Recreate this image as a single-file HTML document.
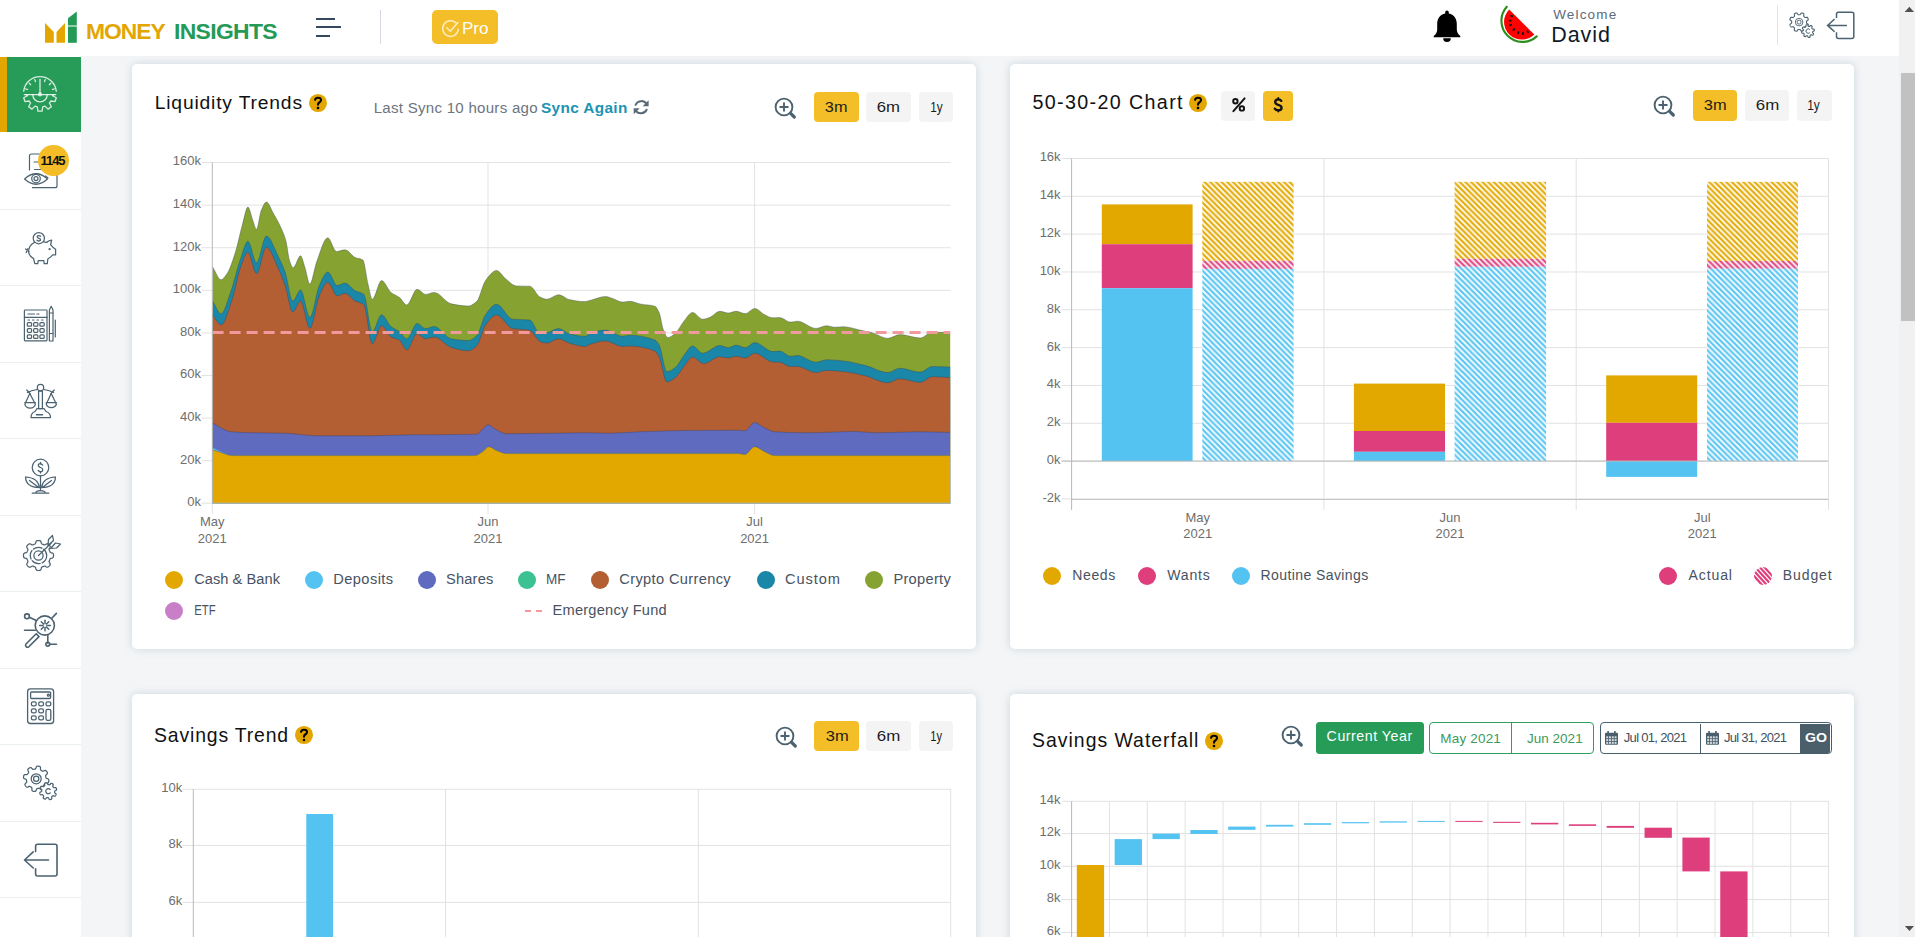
<!DOCTYPE html>
<html><head><meta charset="utf-8"><title>Money Insights</title>
<style>
html,body{margin:0;padding:0;width:1915px;height:937px;overflow:hidden;background:#f4f5f7;font-family:"Liberation Sans",sans-serif}
.abs{position:absolute;display:block;box-sizing:border-box}
.t{position:absolute;white-space:nowrap;display:block}
svg.abs{overflow:visible}
</style></head><body>
<div class="abs" style="left:0;top:0;width:1899px;height:56px;background:#fff"></div>
<svg class="abs" style="left:40px;top:8px" width="40" height="38" viewBox="40 8 40 38">
<polygon points="45,23 53.8,32 53.8,42.8 45,42.8" fill="#e3a600"/>
<polygon points="56.5,32 65,23 65,42.8 56.5,42.8" fill="#e3a600"/>
<polygon points="68,26.5 68,42.8 76.8,42.8 76.8,26.5" fill="#249a56"/>
<polygon points="68,18.3 76.8,11.5 76.8,25.5 68,25.5" fill="#249a56"/>
</svg>
<div class="abs" style="left:316px;top:18px;width:19px;height:2px;background:#34495e"></div>
<div class="abs" style="left:316px;top:26px;width:25px;height:2px;background:#34495e"></div>
<div class="abs" style="left:316px;top:35px;width:14px;height:2px;background:#34495e"></div>
<div class="abs" style="left:380px;top:10px;width:1px;height:34px;background:#d8d8e2"></div>
<div class="abs" style="left:432px;top:10px;width:66px;height:34px;background:#f4be28;border-radius:5px"></div>
<svg class="abs" style="left:438px;top:16px" width="24" height="24" viewBox="438 16 24 24">
<path d="M456 23 A7.8 7.8 0 1 0 458.3 29.2" fill="none" stroke="rgba(255,255,255,0.72)" stroke-width="1.5" stroke-linecap="round"/>
<path d="M446.8 27.8 L450.3 31.2 L457.9 22.4" fill="none" stroke="rgba(255,255,255,0.72)" stroke-width="1.5" stroke-linecap="round" stroke-linejoin="round"/>
</svg>
<svg class="abs" style="left:1430px;top:8px" width="34" height="36" viewBox="0 0 34 36">
<path d="M17 2.5 a1.8 1.8 0 0 1 1.8 1.8 v1.2 c5 1 8 5 8 10.5 v5.5 c0 3 1.5 5 3.5 6.5 v1.3 h-26.6 v-1.3 c2 -1.5 3.5 -3.5 3.5 -6.5 v-5.5 c0 -5.5 3 -9.5 8 -10.5 v-1.2 a1.8 1.8 0 0 1 1.8 -1.8 z" fill="#000"/>
<path d="M13.2 30.2 h7.6 a3.8 3.8 0 0 1 -7.6 0 z" fill="#000"/>
</svg>
<svg class="abs" style="left:1495px;top:2px" width="50" height="46" viewBox="1495 2 50 46">
<path d="M1506.8 6.7 A21.1 21.1 0 0 0 1536.7 36.4" fill="none" stroke="#2b8d1c" stroke-width="2.1" stroke-linecap="round"/>
<path d="M1509.2 9.4 A17.7 17.7 0 0 0 1534.3 34.4 Z" fill="#ff0000"/>
<g fill="#111">
<ellipse cx="1511.7" cy="16" rx="1.5" ry="1" transform="rotate(20 1511.7 16)"/>
<ellipse cx="1510.2" cy="20.7" rx="1.5" ry="1" transform="rotate(-5 1510.2 20.7)"/>
<ellipse cx="1510.6" cy="25.1" rx="1.5" ry="1" transform="rotate(-20 1510.6 25.1)"/>
<ellipse cx="1513.9" cy="29.5" rx="1.6" ry="1" transform="rotate(-45 1513.9 29.5)"/>
<ellipse cx="1518.3" cy="32.7" rx="1.6" ry="1" transform="rotate(-70 1518.3 32.7)"/>
<ellipse cx="1523" cy="33.4" rx="1.6" ry="1" transform="rotate(-90 1523 33.4)"/>
<ellipse cx="1527.7" cy="31.7" rx="1.6" ry="1" transform="rotate(-110 1527.7 31.7)"/>
</g>
</svg>
<div class="abs" style="left:1777px;top:5px;width:1px;height:40px;background:#dfe4e8"></div>
<svg class="abs" style="left:1785px;top:8px" width="34" height="34" viewBox="1785 8 34 34">
<path d="M1806.50 22.10 L1806.50 22.34 L1806.50 22.58 L1806.51 22.83 L1806.58 23.08 L1806.84 23.38 L1807.44 23.76 L1808.01 24.18 L1808.24 24.55 L1808.25 24.87 L1808.18 25.18 L1808.08 25.48 L1807.97 25.77 L1807.84 26.06 L1807.70 26.34 L1807.53 26.61 L1807.29 26.83 L1806.87 26.93 L1806.17 26.82 L1805.48 26.67 L1805.08 26.69 L1804.85 26.82 L1804.67 26.99 L1804.50 27.16 L1804.33 27.33 L1804.16 27.50 L1803.99 27.67 L1803.82 27.85 L1803.69 28.08 L1803.67 28.48 L1803.82 29.17 L1803.93 29.87 L1803.83 30.29 L1803.61 30.53 L1803.34 30.70 L1803.06 30.84 L1802.77 30.97 L1802.48 31.08 L1802.18 31.18 L1801.87 31.25 L1801.55 31.24 L1801.18 31.01 L1800.76 30.44 L1800.38 29.84 L1800.08 29.58 L1799.83 29.51 L1799.58 29.50 L1799.34 29.50 L1799.10 29.50 L1798.86 29.50 L1798.62 29.50 L1798.37 29.51 L1798.12 29.58 L1797.82 29.84 L1797.44 30.44 L1797.02 31.01 L1796.65 31.24 L1796.33 31.25 L1796.02 31.18 L1795.72 31.08 L1795.43 30.97 L1795.14 30.84 L1794.86 30.70 L1794.59 30.53 L1794.37 30.29 L1794.27 29.87 L1794.38 29.17 L1794.53 28.48 L1794.51 28.08 L1794.38 27.85 L1794.21 27.67 L1794.04 27.50 L1793.87 27.33 L1793.70 27.16 L1793.53 26.99 L1793.35 26.82 L1793.12 26.69 L1792.72 26.67 L1792.03 26.82 L1791.33 26.93 L1790.91 26.83 L1790.67 26.61 L1790.50 26.34 L1790.36 26.06 L1790.23 25.77 L1790.12 25.48 L1790.02 25.18 L1789.95 24.87 L1789.96 24.55 L1790.19 24.18 L1790.76 23.76 L1791.36 23.38 L1791.62 23.08 L1791.69 22.83 L1791.70 22.58 L1791.70 22.34 L1791.70 22.10 L1791.70 21.86 L1791.70 21.62 L1791.69 21.37 L1791.62 21.12 L1791.36 20.82 L1790.76 20.44 L1790.19 20.02 L1789.96 19.65 L1789.95 19.33 L1790.02 19.02 L1790.12 18.72 L1790.23 18.43 L1790.36 18.14 L1790.50 17.86 L1790.67 17.59 L1790.91 17.37 L1791.33 17.27 L1792.03 17.38 L1792.72 17.53 L1793.12 17.51 L1793.35 17.38 L1793.53 17.21 L1793.70 17.04 L1793.87 16.87 L1794.04 16.70 L1794.21 16.53 L1794.38 16.35 L1794.51 16.12 L1794.53 15.72 L1794.38 15.03 L1794.27 14.33 L1794.37 13.91 L1794.59 13.67 L1794.86 13.50 L1795.14 13.36 L1795.43 13.23 L1795.72 13.12 L1796.02 13.02 L1796.33 12.95 L1796.65 12.96 L1797.02 13.19 L1797.44 13.76 L1797.82 14.36 L1798.12 14.62 L1798.37 14.69 L1798.62 14.70 L1798.86 14.70 L1799.10 14.70 L1799.34 14.70 L1799.58 14.70 L1799.83 14.69 L1800.08 14.62 L1800.38 14.36 L1800.76 13.76 L1801.18 13.19 L1801.55 12.96 L1801.87 12.95 L1802.18 13.02 L1802.48 13.12 L1802.77 13.23 L1803.06 13.36 L1803.34 13.50 L1803.61 13.67 L1803.83 13.91 L1803.93 14.33 L1803.82 15.03 L1803.67 15.72 L1803.69 16.12 L1803.82 16.35 L1803.99 16.53 L1804.16 16.70 L1804.33 16.87 L1804.50 17.04 L1804.67 17.21 L1804.85 17.38 L1805.08 17.51 L1805.48 17.53 L1806.17 17.38 L1806.87 17.27 L1807.29 17.37 L1807.53 17.59 L1807.70 17.86 L1807.84 18.14 L1807.97 18.43 L1808.08 18.72 L1808.18 19.02 L1808.25 19.33 L1808.24 19.65 L1808.01 20.02 L1807.44 20.44 L1806.84 20.82 L1806.58 21.12 L1806.51 21.37 L1806.50 21.62 L1806.50 21.86Z" fill="none" stroke="#4b6270" stroke-width="1.1" stroke-linejoin="round"/>
<circle cx="1799.1" cy="22.1" r="3.8" fill="none" stroke="#4b6270" stroke-width="0.9"/>
<circle cx="1799.1" cy="22.1" r="2" fill="none" stroke="#4b6270" stroke-width="0.9"/>
<path d="M1812.70 32.05 L1812.67 32.21 L1812.64 32.36 L1812.62 32.52 L1812.64 32.69 L1812.79 32.92 L1813.17 33.26 L1813.52 33.63 L1813.64 33.91 L1813.61 34.12 L1813.52 34.32 L1813.42 34.50 L1813.31 34.68 L1813.19 34.85 L1813.06 35.01 L1812.91 35.16 L1812.72 35.27 L1812.42 35.27 L1811.95 35.07 L1811.49 34.85 L1811.22 34.80 L1811.05 34.85 L1810.91 34.93 L1810.78 35.01 L1810.65 35.10 L1810.52 35.19 L1810.39 35.27 L1810.26 35.37 L1810.15 35.51 L1810.10 35.78 L1810.12 36.28 L1810.12 36.79 L1810.00 37.07 L1809.83 37.20 L1809.63 37.28 L1809.43 37.34 L1809.23 37.38 L1809.02 37.42 L1808.81 37.44 L1808.60 37.44 L1808.39 37.39 L1808.18 37.17 L1807.98 36.70 L1807.81 36.22 L1807.66 35.99 L1807.51 35.91 L1807.35 35.87 L1807.20 35.83 L1807.05 35.80 L1806.89 35.77 L1806.74 35.74 L1806.58 35.72 L1806.41 35.74 L1806.18 35.89 L1805.84 36.27 L1805.47 36.62 L1805.19 36.74 L1804.98 36.71 L1804.78 36.62 L1804.60 36.52 L1804.42 36.41 L1804.25 36.29 L1804.09 36.16 L1803.94 36.01 L1803.83 35.82 L1803.83 35.52 L1804.03 35.05 L1804.25 34.59 L1804.30 34.32 L1804.25 34.15 L1804.17 34.01 L1804.09 33.88 L1804.00 33.75 L1803.91 33.62 L1803.83 33.49 L1803.73 33.36 L1803.59 33.25 L1803.32 33.20 L1802.82 33.22 L1802.31 33.22 L1802.03 33.10 L1801.90 32.93 L1801.82 32.73 L1801.76 32.53 L1801.72 32.33 L1801.68 32.12 L1801.66 31.91 L1801.66 31.70 L1801.71 31.49 L1801.93 31.28 L1802.40 31.08 L1802.88 30.91 L1803.11 30.76 L1803.19 30.61 L1803.23 30.45 L1803.27 30.30 L1803.30 30.15 L1803.33 29.99 L1803.36 29.84 L1803.38 29.68 L1803.36 29.51 L1803.21 29.28 L1802.83 28.94 L1802.48 28.57 L1802.36 28.29 L1802.39 28.08 L1802.48 27.88 L1802.58 27.70 L1802.69 27.52 L1802.81 27.35 L1802.94 27.19 L1803.09 27.04 L1803.28 26.93 L1803.58 26.93 L1804.05 27.13 L1804.51 27.35 L1804.78 27.40 L1804.95 27.35 L1805.09 27.27 L1805.22 27.19 L1805.35 27.10 L1805.48 27.01 L1805.61 26.93 L1805.74 26.83 L1805.85 26.69 L1805.90 26.42 L1805.88 25.92 L1805.88 25.41 L1806.00 25.13 L1806.17 25.00 L1806.37 24.92 L1806.57 24.86 L1806.77 24.82 L1806.98 24.78 L1807.19 24.76 L1807.40 24.76 L1807.61 24.81 L1807.82 25.03 L1808.02 25.50 L1808.19 25.98 L1808.34 26.21 L1808.49 26.29 L1808.65 26.33 L1808.80 26.37 L1808.95 26.40 L1809.11 26.43 L1809.26 26.46 L1809.42 26.48 L1809.59 26.46 L1809.82 26.31 L1810.16 25.93 L1810.53 25.58 L1810.81 25.46 L1811.02 25.49 L1811.22 25.58 L1811.40 25.68 L1811.58 25.79 L1811.75 25.91 L1811.91 26.04 L1812.06 26.19 L1812.17 26.38 L1812.17 26.68 L1811.97 27.15 L1811.75 27.61 L1811.70 27.88 L1811.75 28.05 L1811.83 28.19 L1811.91 28.32 L1812.00 28.45 L1812.09 28.58 L1812.17 28.71 L1812.27 28.84 L1812.41 28.95 L1812.68 29.00 L1813.18 28.98 L1813.69 28.98 L1813.97 29.10 L1814.10 29.27 L1814.18 29.47 L1814.24 29.67 L1814.28 29.87 L1814.32 30.08 L1814.34 30.29 L1814.34 30.50 L1814.29 30.71 L1814.07 30.92 L1813.60 31.12 L1813.12 31.29 L1812.89 31.44 L1812.81 31.59 L1812.77 31.75 L1812.73 31.90Z" fill="#fff" stroke="#4b6270" stroke-width="1.1" stroke-linejoin="round"/>
<path d="M1809.8 29.6 A2.2 2.2 0 1 0 1809.8 32.6" fill="none" stroke="#4b6270" stroke-width="1"/>
</svg>
<svg class="abs" style="left:1824px;top:9px" width="34" height="34" viewBox="1824 9 34 34">
<path d="M1836.5 17.9 V14.2 a2 2 0 0 1 2 -2 H1851.8 a2 2 0 0 1 2 2 V36.4 a2 2 0 0 1 -2 2 H1838.5 a2 2 0 0 1 -2 -2 V32.3" fill="none" stroke="#4b6270" stroke-width="1.5"/>
<path d="M1834.6 19 L1827.6 25.4 L1834.6 31.7 M1827.6 25.4 H1846.9" fill="none" stroke="#4b6270" stroke-width="1.5"/>
</svg>
<div class="abs" style="left:0;top:56px;width:81px;height:881px;background:#fff"></div>
<div class="abs" style="left:0;top:57px;width:81px;height:74.5px;background:#279c59"></div>
<div class="abs" style="left:0;top:57px;width:6.5px;height:74.5px;background:#e3a600"></div>
<div class="abs" style="left:0;top:208.5px;width:81px;height:1px;background:#eaf0f0"></div>
<div class="abs" style="left:0;top:285.0px;width:81px;height:1px;background:#eaf0f0"></div>
<div class="abs" style="left:0;top:361.5px;width:81px;height:1px;background:#eaf0f0"></div>
<div class="abs" style="left:0;top:438.0px;width:81px;height:1px;background:#eaf0f0"></div>
<div class="abs" style="left:0;top:514.5px;width:81px;height:1px;background:#eaf0f0"></div>
<div class="abs" style="left:0;top:591.0px;width:81px;height:1px;background:#eaf0f0"></div>
<div class="abs" style="left:0;top:667.5px;width:81px;height:1px;background:#eaf0f0"></div>
<div class="abs" style="left:0;top:744.0px;width:81px;height:1px;background:#eaf0f0"></div>
<div class="abs" style="left:0;top:820.5px;width:81px;height:1px;background:#eaf0f0"></div>
<div class="abs" style="left:0;top:897.0px;width:81px;height:1px;background:#eaf0f0"></div>
<svg class="abs" style="left:20px;top:74px" width="40" height="40" viewBox="20 74 40 40">
<g fill="none" stroke="rgba(255,255,255,0.82)" stroke-width="1.3" stroke-linecap="round" stroke-linejoin="round">
<path d="M23.7 91.2 A16.4 16.4 0 0 1 56.3 91.2"/>
<line x1="27.60" y1="89.49" x2="25.72" y2="88.80"/><line x1="30.67" y1="84.67" x2="29.25" y2="83.25"/><line x1="35.49" y1="81.60" x2="34.80" y2="79.72"/><line x1="44.51" y1="81.60" x2="45.20" y2="79.72"/><line x1="49.33" y1="84.67" x2="50.75" y2="83.25"/><line x1="52.40" y1="89.49" x2="54.28" y2="88.80"/>
<line x1="40" y1="79.5" x2="40" y2="93"/>
<circle cx="40" cy="94.4" r="1.4"/>
<path d="M24.3 94.6 H55.7"/>
<path d="M32.7 94.6 A7.3 7.3 0 0 0 47.3 94.6"/>
<path d="M54.10 94.60 L52.54 95.79 L56.31 97.71 L55.02 101.67 L50.85 101.01 L49.45 102.93 L51.36 106.70 L48.00 109.15 L45.00 106.16 L42.75 106.90 L42.08 111.07 L37.92 111.07 L37.25 106.90 L35.00 106.16 L32.00 109.15 L28.64 106.70 L30.55 102.93 L29.15 101.01 L24.98 101.67 L23.69 97.71 L27.46 95.79 L25.90 94.60"/>
</g></svg>
<svg class="abs" style="left:20px;top:148px" width="42" height="44" viewBox="20 148 42 44">
<g fill="none" stroke="#4b6270" stroke-width="1.2" stroke-linecap="round" stroke-linejoin="round">
<path d="M29.5 170 V156 a2 2 0 0 1 2 -2 H55 a2 2 0 0 1 2 2 V185.7 a2 2 0 0 1 -2 2 H32.5"/>
<line x1="34" y1="162" x2="38" y2="162"/><line x1="34.5" y1="169.5" x2="41" y2="169.5"/>
<path d="M24.6 179 Q36 168.5 47.5 179 Q36 189.5 24.6 179 Z" fill="#fff"/>
<circle cx="36" cy="178.6" r="4.3"/><circle cx="36" cy="178.6" r="2"/>
<line x1="45.5" y1="176" x2="48" y2="178"/>
</g></svg>
<div class="abs" style="left:38px;top:145px;width:30.6px;height:30.6px;border-radius:50%;background:#f4bd28"></div>
<svg class="abs" style="left:20px;top:226px" width="42" height="42" viewBox="20 226 42 42">
<g fill="none" stroke="#4b6270" stroke-width="1.25" stroke-linecap="round" stroke-linejoin="round">
<circle cx="38.8" cy="238.2" r="5.6"/>
<path d="M40.6 236.3 Q38.8 234.8 37.2 236.3 Q37 238 38.8 238.3 Q40.7 238.6 40.4 240.3 Q38.8 241.8 37 240.2"/>
<path d="M34.4 242.5 Q29 245 28.6 251.5 Q28.8 256 33.6 258.6 L34.8 263.6 H37.8 L38.2 260.5 H43.8 L44.2 263.6 H47.3 L47.8 259 Q51.5 257 52.6 254.8 H55.6 V249.2 L53.4 247.8 Q52 246 50.6 244.8 L51.6 240.2 Q48 240.8 46.6 242.5 Q45 241.8 43.8 241.8"/>
<path d="M25.6 249 L28.8 251.5 M26.2 252.6 L28 248.6"/>
<circle cx="49.6" cy="249.2" r="0.5"/>
</g></svg>
<svg class="abs" style="left:20px;top:302px" width="42" height="44" viewBox="20 302 42 44">
<g fill="none" stroke="#4b6270" stroke-width="1.2" stroke-linecap="round" stroke-linejoin="round">
<rect x="24.4" y="310" width="22.6" height="30.8" rx="0.8"/>
<line x1="24.4" y1="317.4" x2="47" y2="317.4"/>
<line x1="28" y1="314" x2="34.5" y2="314"/><line x1="36.8" y1="314" x2="39" y2="314"/>
<line x1="28" y1="320" x2="43.8" y2="320" stroke-dasharray="1.5 3"/>
<rect x="27.3" y="322.6" width="4.3" height="3.6" rx="1"/><rect x="33.6" y="322.6" width="4.3" height="3.6" rx="1"/><rect x="39.9" y="322.6" width="4.3" height="3.6" rx="1"/><rect x="27.3" y="328.7" width="4.3" height="3.6" rx="1"/><rect x="33.6" y="328.7" width="4.3" height="3.6" rx="1"/><rect x="39.9" y="328.7" width="4.3" height="3.6" rx="1"/><rect x="27.3" y="334.8" width="4.3" height="3.6" rx="1"/><rect x="33.6" y="334.8" width="4.3" height="3.6" rx="1"/><rect x="39.9" y="334.8" width="4.3" height="3.6" rx="1"/>
<path d="M49.4 341 V310 L51.2 306.3 L53 310 V341 Z"/>
<line x1="49.4" y1="313" x2="53" y2="313"/><line x1="49.4" y1="333.5" x2="53" y2="333.5"/>
<line x1="55.3" y1="320" x2="55.3" y2="337"/>
</g></svg>
<svg class="abs" style="left:20px;top:378px" width="42" height="44" viewBox="20 378 42 44">
<g fill="none" stroke="#4b6270" stroke-width="1.25" stroke-linecap="round" stroke-linejoin="round">
<circle cx="40.5" cy="387.6" r="3.2"/>
<path d="M37.2 389.5 Q31 390.5 27.5 392.5 M43.8 389.5 Q50 390.5 53.5 392.5"/>
<path d="M26.8 390 L30 393.5 M54.2 390 L51 393.5"/>
<rect x="38.6" y="391" width="3.8" height="17.5"/>
<path d="M29.8 393.5 L24.8 404.2 A5.5 5.5 0 0 0 35.4 404.2 Z M24.8 402.6 H35.4"/>
<path d="M51.2 393.5 L46.2 404.2 A5.5 5.5 0 0 0 56.4 404.2 Z M46.2 402.6 H56.4"/>
<path d="M37 408.5 H44 L46 411.5 Q50.5 413 50.5 417.5 H31 Q31 413 35 411.5 Z"/>
<line x1="36.5" y1="414.8" x2="42.5" y2="414.8" stroke-width="1.6"/>
</g></svg>
<svg class="abs" style="left:20px;top:454px" width="42" height="44" viewBox="20 454 42 44">
<g fill="none" stroke="#4b6270" stroke-width="1.25" stroke-linecap="round" stroke-linejoin="round">
<circle cx="40.5" cy="467.5" r="8.3"/>
<path d="M42.6 465 Q40.5 462.5 38.5 464.2 Q37.6 466.5 40.5 467.5 Q43.5 468.5 42.5 471 Q40.5 472.8 38.2 470.5 M40.5 462.3 V464 M40.5 471.5 V473"/>
<line x1="40.5" y1="475.8" x2="40.5" y2="490.5"/>
<path d="M39.5 487.5 Q38 477.5 25.5 477 Q26 487.5 39.5 487.5 Z M29.5 480.5 L38 487"/>
<path d="M41.5 487.5 Q43 477.5 55.5 477 Q55 487.5 41.5 487.5 Z M51.5 480.5 L43 487"/>
<path d="M35.6 493 Q36 490.5 40.5 490.5 Q45 490.5 45.4 493 M32.2 493.2 H48.8"/>
</g></svg>
<svg class="abs" style="left:20px;top:530px" width="42" height="46" viewBox="20 530 42 46">
<g fill="none" stroke="#4b6270" stroke-width="1.25" stroke-linecap="round" stroke-linejoin="round">
<path d="M49.60 560.06 L49.45 560.42 L49.29 560.79 L49.15 561.16 L49.08 561.57 L49.23 562.13 L49.75 562.97 L50.22 563.85 L50.27 564.48 L50.08 564.95 L49.79 565.35 L49.47 565.72 L49.14 566.08 L48.78 566.42 L48.41 566.74 L48.01 567.02 L47.55 567.22 L46.91 567.17 L46.03 566.70 L45.19 566.19 L44.63 566.04 L44.21 566.12 L43.84 566.26 L43.48 566.42 L43.12 566.57 L42.76 566.72 L42.39 566.87 L42.03 567.03 L41.69 567.27 L41.40 567.77 L41.17 568.73 L40.88 569.69 L40.47 570.17 L40.00 570.37 L39.52 570.45 L39.03 570.49 L38.54 570.50 L38.05 570.49 L37.56 570.45 L37.08 570.37 L36.61 570.19 L36.19 569.70 L35.90 568.75 L35.67 567.79 L35.38 567.29 L35.03 567.05 L34.67 566.89 L34.30 566.75 L33.94 566.60 L33.58 566.45 L33.21 566.29 L32.84 566.15 L32.43 566.08 L31.87 566.23 L31.03 566.75 L30.15 567.22 L29.52 567.27 L29.05 567.08 L28.65 566.79 L28.28 566.47 L27.92 566.14 L27.58 565.78 L27.26 565.41 L26.98 565.01 L26.78 564.55 L26.83 563.91 L27.30 563.03 L27.81 562.19 L27.96 561.63 L27.88 561.21 L27.74 560.84 L27.58 560.48 L27.43 560.12 L27.28 559.76 L27.13 559.39 L26.97 559.03 L26.73 558.69 L26.23 558.40 L25.27 558.17 L24.31 557.88 L23.83 557.47 L23.63 557.00 L23.55 556.52 L23.51 556.03 L23.50 555.54 L23.51 555.05 L23.55 554.56 L23.63 554.08 L23.81 553.61 L24.30 553.19 L25.25 552.90 L26.21 552.67 L26.71 552.38 L26.95 552.03 L27.11 551.67 L27.25 551.30 L27.40 550.94 L27.55 550.58 L27.71 550.21 L27.85 549.84 L27.92 549.43 L27.77 548.87 L27.25 548.03 L26.78 547.15 L26.73 546.52 L26.92 546.05 L27.21 545.65 L27.53 545.28 L27.86 544.92 L28.22 544.58 L28.59 544.26 L28.99 543.98 L29.45 543.78 L30.09 543.83 L30.97 544.30 L31.81 544.81 L32.37 544.96 L32.79 544.88 L33.16 544.74 L33.52 544.58 L33.88 544.43 L34.24 544.28 L34.61 544.13 L34.97 543.97 L35.31 543.73 L35.60 543.23 L35.83 542.27 L36.12 541.31 L36.53 540.83 L37.00 540.63 L37.48 540.55 L37.97 540.51 L38.46 540.50 L38.95 540.51 L39.44 540.55 L39.92 540.63 L40.39 540.81 L40.81 541.30 L41.10 542.25 L41.33 543.21 L41.62 543.71 L41.97 543.95 L42.33 544.11 L42.70 544.25 L43.06 544.40 L43.42 544.55 L43.79 544.71 L44.16 544.85 L44.57 544.92 L45.13 544.77 L45.97 544.25 L46.85 543.78 L47.48 543.73 L47.95 543.92 L48.35 544.21 L48.72 544.53 L49.08 544.86 L49.42 545.22 L49.74 545.59 L50.02 545.99 L50.22 546.45 L50.17 547.09 L49.70 547.97 L49.19 548.81 L49.04 549.37 L49.12 549.79 L49.26 550.16 L49.42 550.52 L49.57 550.88 L49.72 551.24 L49.87 551.61 L50.03 551.97 L50.27 552.31 L50.77 552.60 L51.73 552.83 L52.69 553.12 L53.17 553.53 L53.37 554.00 L53.45 554.48 L53.49 554.97 L53.50 555.46 L53.49 555.95 L53.45 556.44 L53.37 556.92 L53.19 557.39 L52.70 557.81 L51.75 558.10 L50.79 558.33 L50.29 558.62 L50.05 558.97 L49.89 559.33 L49.75 559.70Z"/>
<circle cx="38.5" cy="555.5" r="8.2" stroke-dasharray="9 2"/>
<circle cx="38.5" cy="555.5" r="4.6"/>
<line x1="38.5" y1="555.5" x2="51" y2="543.2"/>
<path d="M48 545.5 L48.5 539.5 L52.5 535.5 L53.5 540.5 Z M50.5 548.5 L56.5 548 L60.5 544 L55.5 543 Z"/>
</g></svg>
<svg class="abs" style="left:20px;top:606px" width="42" height="46" viewBox="20 606 42 46">
<g fill="none" stroke="#4b6270" stroke-width="1.6" stroke-linecap="round" stroke-linejoin="round">
<circle cx="44.8" cy="625.5" r="9.6"/>
<circle cx="27" cy="616.3" r="2.4"/>
<line x1="29.3" y1="617.3" x2="35.8" y2="620.3"/>
<line x1="24.5" y1="630.3" x2="35.4" y2="630.3"/>
<line x1="51.5" y1="618.5" x2="56.4" y2="613.4"/>
<path d="M47.8 635 V643.2 M49.6 644.2 H56.5"/><circle cx="47.8" cy="644.2" r="1.9"/>
<path d="M36.2 633.8 L26 644 A2 2 0 0 0 28.8 646.8 L39 636.6 Z"/>
</g>
<g stroke="#4b6270" stroke-width="1.5" stroke-linecap="round">
<line x1="47.00" y1="625.50" x2="50.30" y2="625.50"/><line x1="46.41" y1="626.91" x2="48.75" y2="629.25"/><line x1="45.00" y1="627.50" x2="45.00" y2="630.80"/><line x1="43.59" y1="626.91" x2="41.25" y2="629.25"/><line x1="43.00" y1="625.50" x2="39.70" y2="625.50"/><line x1="43.59" y1="624.09" x2="41.25" y2="621.75"/><line x1="45.00" y1="623.50" x2="45.00" y2="620.20"/><line x1="46.41" y1="624.09" x2="48.75" y2="621.75"/>
</g></svg>
<svg class="abs" style="left:20px;top:684px" width="42" height="44" viewBox="20 684 42 44">
<g fill="none" stroke="#4b6270" stroke-width="1.3" stroke-linecap="round" stroke-linejoin="round">
<rect x="27.6" y="688.9" width="26" height="34.6" rx="2.8"/>
<rect x="30.6" y="692" width="20" height="6.5" rx="1"/>
<rect x="31.4" y="701.8" width="4.8" height="4" rx="1.6"/><rect x="38.7" y="701.8" width="4.8" height="4" rx="1.6"/><rect x="46.0" y="701.8" width="4.8" height="4" rx="1.6"/><rect x="31.4" y="708.8" width="4.8" height="4" rx="1.6"/><rect x="38.7" y="708.8" width="4.8" height="4" rx="1.6"/><rect x="31.4" y="715.8" width="4.8" height="4" rx="1.6"/><rect x="38.7" y="715.8" width="4.8" height="4" rx="1.6"/>
<rect x="46" y="709.3" width="4.8" height="11" rx="1.6"/>
<circle cx="48.4" cy="695.2" r="1"/>
</g></svg>
<svg class="abs" style="left:20px;top:760px" width="42" height="44" viewBox="20 760 42 44">
<g fill="none" stroke="#4b6270" stroke-width="1.25" stroke-linecap="round" stroke-linejoin="round">
<path d="M45.80 776.85 L45.87 777.17 L45.93 777.48 L46.01 777.80 L46.17 778.11 L46.60 778.42 L47.50 778.76 L48.38 779.15 L48.78 779.58 L48.88 780.00 L48.88 780.42 L48.83 780.84 L48.76 781.25 L48.67 781.66 L48.56 782.06 L48.41 782.45 L48.15 782.81 L47.62 783.05 L46.66 783.09 L45.70 783.06 L45.18 783.19 L44.91 783.42 L44.72 783.68 L44.54 783.95 L44.37 784.21 L44.19 784.48 L44.01 784.75 L43.84 785.03 L43.74 785.36 L43.82 785.89 L44.22 786.76 L44.57 787.67 L44.55 788.25 L44.32 788.62 L44.02 788.91 L43.69 789.17 L43.35 789.42 L43.00 789.64 L42.63 789.85 L42.25 790.02 L41.82 790.09 L41.27 789.89 L40.56 789.22 L39.90 788.53 L39.45 788.25 L39.10 788.22 L38.78 788.27 L38.46 788.34 L38.15 788.40 L37.83 788.47 L37.52 788.53 L37.20 788.61 L36.89 788.77 L36.58 789.20 L36.24 790.10 L35.85 790.98 L35.42 791.38 L35.00 791.48 L34.58 791.48 L34.16 791.43 L33.75 791.36 L33.34 791.27 L32.94 791.16 L32.55 791.01 L32.19 790.75 L31.95 790.22 L31.91 789.26 L31.94 788.30 L31.81 787.78 L31.58 787.51 L31.32 787.32 L31.05 787.14 L30.79 786.97 L30.52 786.79 L30.25 786.61 L29.97 786.44 L29.64 786.34 L29.11 786.42 L28.24 786.82 L27.33 787.17 L26.75 787.15 L26.38 786.92 L26.09 786.62 L25.83 786.29 L25.58 785.95 L25.36 785.60 L25.15 785.23 L24.98 784.85 L24.91 784.42 L25.11 783.87 L25.78 783.16 L26.47 782.50 L26.75 782.05 L26.78 781.70 L26.73 781.38 L26.66 781.06 L26.60 780.75 L26.53 780.43 L26.47 780.12 L26.39 779.80 L26.23 779.49 L25.80 779.18 L24.90 778.84 L24.02 778.45 L23.62 778.02 L23.52 777.60 L23.52 777.18 L23.57 776.76 L23.64 776.35 L23.73 775.94 L23.84 775.54 L23.99 775.15 L24.25 774.79 L24.78 774.55 L25.74 774.51 L26.70 774.54 L27.22 774.41 L27.49 774.18 L27.68 773.92 L27.86 773.65 L28.03 773.39 L28.21 773.12 L28.39 772.85 L28.56 772.57 L28.66 772.24 L28.58 771.71 L28.18 770.84 L27.83 769.93 L27.85 769.35 L28.08 768.98 L28.38 768.69 L28.71 768.43 L29.05 768.18 L29.40 767.96 L29.77 767.75 L30.15 767.58 L30.58 767.51 L31.13 767.71 L31.84 768.38 L32.50 769.07 L32.95 769.35 L33.30 769.38 L33.62 769.33 L33.94 769.26 L34.25 769.20 L34.57 769.13 L34.88 769.07 L35.20 768.99 L35.51 768.83 L35.82 768.40 L36.16 767.50 L36.55 766.62 L36.98 766.22 L37.40 766.12 L37.82 766.12 L38.24 766.17 L38.65 766.24 L39.06 766.33 L39.46 766.44 L39.85 766.59 L40.21 766.85 L40.45 767.38 L40.49 768.34 L40.46 769.30 L40.59 769.82 L40.82 770.09 L41.08 770.28 L41.35 770.46 L41.61 770.63 L41.88 770.81 L42.15 770.99 L42.43 771.16 L42.76 771.26 L43.29 771.18 L44.16 770.78 L45.07 770.43 L45.65 770.45 L46.02 770.68 L46.31 770.98 L46.57 771.31 L46.82 771.65 L47.04 772.00 L47.25 772.37 L47.42 772.75 L47.49 773.18 L47.29 773.73 L46.62 774.44 L45.93 775.10 L45.65 775.55 L45.62 775.90 L45.67 776.22 L45.74 776.54Z"/>
<circle cx="36.2" cy="778.8" r="5"/><circle cx="36.2" cy="778.8" r="2.6"/>
<path d="M54.67 791.85 L54.65 792.06 L54.62 792.27 L54.61 792.49 L54.66 792.72 L54.89 793.01 L55.42 793.40 L55.93 793.84 L56.12 794.20 L56.10 794.49 L56.02 794.76 L55.90 795.02 L55.78 795.27 L55.64 795.51 L55.48 795.75 L55.31 795.97 L55.07 796.14 L54.68 796.19 L54.03 796.00 L53.40 795.78 L53.03 795.74 L52.82 795.83 L52.64 795.96 L52.48 796.10 L52.31 796.23 L52.15 796.37 L51.98 796.50 L51.82 796.65 L51.69 796.84 L51.65 797.21 L51.75 797.86 L51.80 798.54 L51.68 798.92 L51.46 799.11 L51.21 799.24 L50.95 799.35 L50.68 799.43 L50.41 799.51 L50.13 799.57 L49.85 799.60 L49.56 799.55 L49.25 799.31 L48.93 798.71 L48.64 798.11 L48.40 797.83 L48.19 797.74 L47.98 797.71 L47.76 797.69 L47.55 797.67 L47.34 797.65 L47.13 797.62 L46.91 797.61 L46.68 797.66 L46.39 797.89 L46.00 798.42 L45.56 798.93 L45.20 799.12 L44.91 799.10 L44.64 799.02 L44.38 798.90 L44.13 798.78 L43.89 798.64 L43.65 798.48 L43.43 798.31 L43.26 798.07 L43.21 797.68 L43.40 797.03 L43.62 796.40 L43.66 796.03 L43.57 795.82 L43.44 795.64 L43.30 795.48 L43.17 795.31 L43.03 795.15 L42.90 794.98 L42.75 794.82 L42.56 794.69 L42.19 794.65 L41.54 794.75 L40.86 794.80 L40.48 794.68 L40.29 794.46 L40.16 794.21 L40.05 793.95 L39.97 793.68 L39.89 793.41 L39.83 793.13 L39.80 792.85 L39.85 792.56 L40.09 792.25 L40.69 791.93 L41.29 791.64 L41.57 791.40 L41.66 791.19 L41.69 790.98 L41.71 790.76 L41.73 790.55 L41.75 790.34 L41.78 790.13 L41.79 789.91 L41.74 789.68 L41.51 789.39 L40.98 789.00 L40.47 788.56 L40.28 788.20 L40.30 787.91 L40.38 787.64 L40.50 787.38 L40.62 787.13 L40.76 786.89 L40.92 786.65 L41.09 786.43 L41.33 786.26 L41.72 786.21 L42.37 786.40 L43.00 786.62 L43.37 786.66 L43.58 786.57 L43.76 786.44 L43.92 786.30 L44.09 786.17 L44.25 786.03 L44.42 785.90 L44.58 785.75 L44.71 785.56 L44.75 785.19 L44.65 784.54 L44.60 783.86 L44.72 783.48 L44.94 783.29 L45.19 783.16 L45.45 783.05 L45.72 782.97 L45.99 782.89 L46.27 782.83 L46.55 782.80 L46.84 782.85 L47.15 783.09 L47.47 783.69 L47.76 784.29 L48.00 784.57 L48.21 784.66 L48.42 784.69 L48.64 784.71 L48.85 784.73 L49.06 784.75 L49.27 784.78 L49.49 784.79 L49.72 784.74 L50.01 784.51 L50.40 783.98 L50.84 783.47 L51.20 783.28 L51.49 783.30 L51.76 783.38 L52.02 783.50 L52.27 783.62 L52.51 783.76 L52.75 783.92 L52.97 784.09 L53.14 784.33 L53.19 784.72 L53.00 785.37 L52.78 786.00 L52.74 786.37 L52.83 786.58 L52.96 786.76 L53.10 786.92 L53.23 787.09 L53.37 787.25 L53.50 787.42 L53.65 787.58 L53.84 787.71 L54.21 787.75 L54.86 787.65 L55.54 787.60 L55.92 787.72 L56.11 787.94 L56.24 788.19 L56.35 788.45 L56.43 788.72 L56.51 788.99 L56.57 789.27 L56.60 789.55 L56.55 789.84 L56.31 790.15 L55.71 790.47 L55.11 790.76 L54.83 791.00 L54.74 791.21 L54.71 791.42 L54.69 791.64Z" fill="#fff"/>
<path d="M50.2 789.6 A2.5 2.5 0 1 0 50.2 792.8"/>
</g></svg>
<svg class="abs" style="left:20px;top:836px" width="42" height="46" viewBox="20 836 42 46">
<g fill="none" stroke="#4b6270" stroke-width="1.6" stroke-linecap="round" stroke-linejoin="round">
<path d="M35.6 851.5 V846.2 a2 2 0 0 1 2 -2 H55 a2 2 0 0 1 2 2 V874 a2 2 0 0 1 -2 2 H37.6 a2 2 0 0 1 -2 -2 V868.7"/>
<path d="M33 857 L24.2 860 L33 863 " stroke="none"/>
<path d="M33.2 851.8 L24.5 860 L33.2 868 M24.5 860 H48.5"/>
</g></svg>
<div class="abs" style="left:1899px;top:0;width:16px;height:937px;background:#f1f1f1"></div>
<div class="abs" style="left:1901px;top:73px;width:14px;height:248px;background:#c1c1c1"></div>
<svg class="abs" style="left:1899px;top:0" width="16" height="937" viewBox="0 0 16 937">
<polygon points="5.7,12 15,12 10.35,6.7" fill="#505050"/>
<polygon points="5.9,926 15,926 10.45,931" fill="#505050"/>
</svg>
<div class="abs" style="left:131.7px;top:64px;width:844.4px;height:585px;background:#fff;border-radius:5px;box-shadow:0 0 9px rgba(105,150,165,0.30)"></div>
<div class="abs" style="left:1009.9px;top:64px;width:844.3px;height:585px;background:#fff;border-radius:5px;box-shadow:0 0 9px rgba(105,150,165,0.30)"></div>
<div class="abs" style="left:131.7px;top:693.6px;width:844.4px;height:400px;background:#fff;border-radius:5px;box-shadow:0 0 9px rgba(105,150,165,0.30)"></div>
<div class="abs" style="left:1009.9px;top:693.6px;width:844.3px;height:400px;background:#fff;border-radius:5px;box-shadow:0 0 9px rgba(105,150,165,0.30)"></div>
<svg class="abs" style="left:0;top:0" width="1000" height="600" viewBox="0 0 1000 600"><line x1="201.5" y1="503.20" x2="950.6" y2="503.20" stroke="#e3e3e3" stroke-width="1"/><line x1="201.5" y1="460.62" x2="950.6" y2="460.62" stroke="#e3e3e3" stroke-width="1"/><line x1="201.5" y1="418.04" x2="950.6" y2="418.04" stroke="#e3e3e3" stroke-width="1"/><line x1="201.5" y1="375.46" x2="950.6" y2="375.46" stroke="#e3e3e3" stroke-width="1"/><line x1="201.5" y1="332.88" x2="950.6" y2="332.88" stroke="#e3e3e3" stroke-width="1"/><line x1="201.5" y1="290.30" x2="950.6" y2="290.30" stroke="#e3e3e3" stroke-width="1"/><line x1="201.5" y1="247.72" x2="950.6" y2="247.72" stroke="#e3e3e3" stroke-width="1"/><line x1="201.5" y1="205.14" x2="950.6" y2="205.14" stroke="#e3e3e3" stroke-width="1"/><line x1="201.5" y1="162.56" x2="950.6" y2="162.56" stroke="#e3e3e3" stroke-width="1"/><line x1="488" y1="162.5" x2="488" y2="514" stroke="#e3e3e3" stroke-width="1"/><line x1="754.6" y1="162.5" x2="754.6" y2="514" stroke="#e3e3e3" stroke-width="1"/><line x1="212.3" y1="503" x2="212.3" y2="514" stroke="#e3e3e3" stroke-width="1"/><path d="M212.60 266.90 C215.43 271.17 218.27 279.70 221.10 279.70 C223.07 279.70 225.03 276.49 227.00 273.70 C229.87 269.63 232.73 260.53 235.60 251.50 C237.90 244.26 240.20 232.25 242.50 224.20 C244.30 217.90 246.10 207.10 247.90 207.10 C249.50 207.10 251.10 215.80 252.70 219.90 C253.97 223.15 255.23 229.30 256.50 229.30 C258.07 229.30 259.63 214.16 261.20 210.50 C262.93 206.45 264.67 202.00 266.40 202.00 C268.67 202.00 270.93 209.03 273.20 213.00 C276.03 217.96 278.87 222.75 281.70 229.30 C283.13 232.61 284.57 235.84 286.00 241.20 C287.13 245.44 288.27 256.61 289.40 260.00 C290.67 263.79 291.93 267.70 293.20 267.70 C295.63 267.70 298.07 255.80 300.50 255.80 C301.93 255.80 303.37 262.74 304.80 266.90 C306.50 271.83 308.20 283.90 309.90 283.90 C312.17 283.90 314.43 267.68 316.70 261.70 C320.40 251.94 324.10 237.80 327.80 237.80 C330.67 237.80 333.53 251.50 336.40 251.50 C339.27 251.50 342.13 249.80 345.00 249.80 C348.40 249.80 351.80 255.98 355.20 257.50 C357.77 258.64 360.33 258.34 362.90 260.00 C364.60 261.10 366.30 277.02 368.00 283.90 C369.43 289.70 370.87 299.30 372.30 299.30 C375.40 299.30 378.50 280.50 381.60 280.50 C384.73 280.50 387.87 289.98 391.00 292.50 C393.87 294.81 396.73 295.43 399.60 297.60 C402.00 299.42 404.40 305.00 406.80 305.00 C410.23 305.00 413.67 289.30 417.10 289.30 C419.93 289.30 422.77 294.40 425.60 294.40 C428.47 294.40 431.33 292.40 434.20 292.40 C439.87 292.40 445.53 302.58 451.20 303.80 C456.90 305.03 462.60 306.00 468.30 306.00 C471.17 306.00 474.03 303.80 476.90 301.20 C479.73 298.63 482.57 284.55 485.40 280.70 C489.10 275.68 492.80 270.50 496.50 270.50 C499.63 270.50 502.77 276.57 505.90 279.00 C509.30 281.64 512.70 285.75 516.10 285.90 C520.67 286.10 525.23 285.99 529.80 286.20 C533.20 286.35 536.60 295.39 540.00 297.00 C542.30 298.09 544.60 299.20 546.90 299.20 C550.87 299.20 554.83 294.70 558.80 294.70 C562.23 294.70 565.67 298.75 569.10 299.50 C574.23 300.62 579.37 301.60 584.50 301.60 C586.33 301.60 588.17 300.82 590.00 300.40 C595.13 299.21 600.27 296.50 605.40 296.50 C608.23 296.50 611.07 298.08 613.90 299.00 C616.77 299.93 619.63 302.10 622.50 302.10 C624.77 302.10 627.03 301.30 629.30 301.30 C633.27 301.30 637.23 303.47 641.20 304.20 C645.77 305.04 650.33 304.78 654.90 306.20 C656.33 306.65 657.77 309.53 659.20 312.70 C660.60 315.79 662.00 326.31 663.40 329.80 C664.83 333.37 666.27 337.50 667.70 337.50 C670.27 337.50 672.83 335.24 675.40 333.20 C678.23 330.95 681.07 324.56 683.90 321.20 C686.77 317.80 689.63 312.40 692.50 312.40 C695.90 312.40 699.30 319.20 702.70 319.20 C705.00 319.20 707.30 318.29 709.60 317.50 C713.00 316.34 716.40 311.30 719.80 311.30 C722.63 311.30 725.47 313.00 728.30 313.00 C730.87 313.00 733.43 311.30 736.00 311.30 C739.13 311.30 742.27 313.60 745.40 313.60 C748.53 313.60 751.67 308.40 754.80 308.40 C757.93 308.40 761.07 312.86 764.20 314.40 C767.03 315.79 769.87 317.80 772.70 317.80 C775.00 317.80 777.30 317.50 779.60 317.50 C783.23 317.50 786.87 322.10 790.50 322.10 C792.77 322.10 795.03 321.20 797.30 321.20 C803.57 321.20 809.83 328.40 816.10 328.40 C819.53 328.40 822.97 325.70 826.40 325.70 C829.23 325.70 832.07 327.20 834.90 327.20 C837.73 327.20 840.57 326.70 843.40 326.70 C849.67 326.70 855.93 329.25 862.20 330.60 C865.63 331.34 869.07 331.97 872.50 332.90 C877.60 334.27 882.70 338.30 887.80 338.30 C891.80 338.30 895.80 334.60 899.80 334.60 C906.63 334.60 913.47 338.00 920.30 338.00 C924.30 338.00 928.30 332.30 932.30 332.30 C938.27 332.30 944.23 332.30 950.20 332.30 L950.20 503.2 L212.60 503.2 Z" fill="#86a332"/><path d="M212.60 301.00 C215.43 305.27 218.27 313.80 221.10 313.80 C224.23 313.80 227.37 300.95 230.50 292.50 C233.90 283.33 237.30 267.66 240.70 258.30 C243.10 251.69 245.50 241.20 247.90 241.20 C250.77 241.20 253.63 262.60 256.50 262.60 C259.80 262.60 263.10 236.10 266.40 236.10 C270.37 236.10 274.33 248.74 278.30 256.60 C280.57 261.09 282.83 265.62 285.10 272.00 C287.67 279.22 290.23 301.00 292.80 301.00 C295.37 301.00 297.93 289.90 300.50 289.90 C303.63 289.90 306.77 317.20 309.90 317.20 C313.03 317.20 316.17 292.35 319.30 285.60 C322.13 279.49 324.97 272.00 327.80 272.00 C330.93 272.00 334.07 285.60 337.20 285.60 C339.80 285.60 342.40 283.10 345.00 283.10 C348.40 283.10 351.80 289.04 355.20 290.80 C358.03 292.27 360.87 292.13 363.70 294.20 C366.57 296.30 369.43 331.80 372.30 331.80 C375.40 331.80 378.50 314.70 381.60 314.70 C384.73 314.70 387.87 324.05 391.00 326.60 C393.87 328.93 396.73 329.65 399.60 331.80 C402.00 333.60 404.40 338.80 406.80 338.80 C410.23 338.80 413.67 323.40 417.10 323.40 C419.93 323.40 422.77 328.60 425.60 328.60 C428.47 328.60 431.33 326.50 434.20 326.50 C439.87 326.50 445.53 337.81 451.20 338.80 C456.90 339.80 462.60 340.50 468.30 340.50 C471.17 340.50 474.03 338.13 476.90 335.40 C479.73 332.70 482.57 318.85 485.40 314.90 C489.10 309.74 492.80 304.30 496.50 304.30 C501.90 304.30 507.30 318.72 512.70 319.20 C518.40 319.71 524.10 319.44 529.80 320.00 C533.20 320.33 536.60 333.70 540.00 333.70 C542.30 333.70 544.60 333.22 546.90 332.80 C550.87 332.07 554.83 328.60 558.80 328.60 C562.23 328.60 565.67 332.83 569.10 333.70 C574.50 335.06 579.90 336.30 585.30 336.30 C586.87 336.30 588.43 333.73 590.00 333.20 C595.13 331.45 600.27 330.10 605.40 330.10 C611.10 330.10 616.80 336.30 622.50 336.30 C624.77 336.30 627.03 335.20 629.30 335.20 C637.83 335.20 646.37 336.66 654.90 340.00 C656.33 340.56 657.77 342.68 659.20 345.10 C661.77 349.43 664.33 371.60 666.90 371.60 C669.73 371.60 672.57 369.47 675.40 367.40 C678.23 365.33 681.07 358.89 683.90 355.40 C686.77 351.87 689.63 346.00 692.50 346.00 C695.90 346.00 699.30 353.20 702.70 353.20 C708.40 353.20 714.10 345.50 719.80 345.50 C722.63 345.50 725.47 347.70 728.30 347.70 C730.87 347.70 733.43 345.10 736.00 345.10 C739.13 345.10 742.27 347.70 745.40 347.70 C748.53 347.70 751.67 342.60 754.80 342.60 C760.77 342.60 766.73 351.60 772.70 351.60 C775.00 351.60 777.30 351.10 779.60 351.10 C783.23 351.10 786.87 356.30 790.50 356.30 C792.77 356.30 795.03 355.40 797.30 355.40 C803.57 355.40 809.83 362.20 816.10 362.20 C819.53 362.20 822.97 359.70 826.40 359.70 C832.07 359.70 837.73 360.31 843.40 360.90 C850.80 361.67 858.20 363.74 865.60 365.60 C873.00 367.46 880.40 372.50 887.80 372.50 C891.80 372.50 895.80 368.20 899.80 368.20 C906.63 368.20 913.47 372.10 920.30 372.10 C924.30 372.10 928.30 366.50 932.30 366.50 C938.27 366.50 944.23 366.83 950.20 367.00 L950.20 503.2 L212.60 503.2 Z" fill="#1a87a8"/><path d="M212.60 314.70 C215.43 318.10 218.27 324.90 221.10 324.90 C224.80 324.90 228.50 310.05 232.20 299.30 C235.03 291.07 237.87 274.34 240.70 266.90 C243.10 260.60 245.50 252.30 247.90 252.30 C250.77 252.30 253.63 273.70 256.50 273.70 C259.80 273.70 263.10 247.20 266.40 247.20 C270.37 247.20 274.33 260.18 278.30 268.60 C280.57 273.41 282.83 279.06 285.10 285.60 C287.67 293.01 290.23 312.10 292.80 312.10 C295.37 312.10 297.93 301.00 300.50 301.00 C303.63 301.00 306.77 328.30 309.90 328.30 C313.03 328.30 316.17 302.74 319.30 295.90 C322.13 289.71 324.97 282.20 327.80 282.20 C330.93 282.20 334.07 295.90 337.20 295.90 C339.80 295.90 342.40 293.30 345.00 293.30 C348.40 293.30 351.80 299.24 355.20 301.00 C358.03 302.47 360.87 302.32 363.70 304.40 C366.57 306.51 369.43 343.70 372.30 343.70 C375.40 343.70 378.50 325.80 381.60 325.80 C384.73 325.80 387.87 335.06 391.00 336.90 C393.87 338.59 396.73 338.52 399.60 340.30 C402.00 341.79 404.40 349.90 406.80 349.90 C410.23 349.90 413.67 333.70 417.10 333.70 C419.93 333.70 422.77 338.80 425.60 338.80 C428.47 338.80 431.33 337.10 434.20 337.10 C439.87 337.10 445.53 345.70 451.20 347.40 C456.90 349.11 462.60 350.80 468.30 350.80 C471.17 350.80 474.03 348.38 476.90 345.60 C479.73 342.86 482.57 328.95 485.40 325.10 C489.10 320.08 492.80 314.90 496.50 314.90 C501.90 314.90 507.30 327.63 512.70 328.60 C518.40 329.62 524.10 329.18 529.80 330.30 C533.20 330.97 536.60 340.09 540.00 341.40 C542.30 342.29 544.60 343.10 546.90 343.10 C550.87 343.10 554.83 338.80 558.80 338.80 C562.23 338.80 565.67 342.12 569.10 343.10 C574.50 344.65 579.90 346.50 585.30 346.50 C586.87 346.50 588.43 344.80 590.00 344.30 C595.13 342.66 600.27 340.90 605.40 340.90 C611.10 340.90 616.80 346.50 622.50 346.50 C624.77 346.50 627.03 346.00 629.30 346.00 C637.83 346.00 646.37 347.48 654.90 351.10 C656.33 351.71 657.77 354.41 659.20 357.10 C661.77 361.92 664.33 381.90 666.90 381.90 C669.73 381.90 672.57 379.67 675.40 377.60 C678.23 375.53 681.07 369.87 683.90 366.50 C686.77 363.09 689.63 357.10 692.50 357.10 C696.20 357.10 699.90 363.60 703.60 363.60 C709.00 363.60 714.40 356.80 719.80 356.80 C722.63 356.80 725.47 358.00 728.30 358.00 C730.87 358.00 733.43 356.30 736.00 356.30 C739.13 356.30 742.27 358.00 745.40 358.00 C748.53 358.00 751.67 353.20 754.80 353.20 C760.77 353.20 766.73 361.48 772.70 361.90 C775.00 362.06 777.30 362.03 779.60 362.20 C783.23 362.47 786.87 366.50 790.50 366.50 C792.77 366.50 795.03 366.50 797.30 366.50 C803.57 366.50 809.83 372.50 816.10 372.50 C819.53 372.50 822.97 370.40 826.40 370.40 C832.07 370.40 837.73 371.03 843.40 371.60 C850.80 372.35 858.20 374.14 865.60 375.90 C873.00 377.66 880.40 382.70 887.80 382.70 C891.80 382.70 895.80 378.80 899.80 378.80 C906.63 378.80 913.47 382.40 920.30 382.40 C924.30 382.40 928.30 376.70 932.30 376.70 C938.27 376.70 944.23 377.30 950.20 377.60 L950.20 503.2 L212.60 503.2 Z" fill="#b35f33"/><path d="M212.50 422.50 C215.30 424.27 218.10 426.41 220.90 427.80 C224.20 429.44 227.50 431.52 230.80 431.80 C238.73 432.48 246.67 432.64 254.60 432.80 C264.53 433.01 274.47 432.98 284.40 433.20 C295.63 433.45 306.87 435.80 318.10 435.80 C333.30 435.80 348.50 435.80 363.70 435.80 C380.23 435.80 396.77 435.02 413.30 434.80 C434.47 434.52 455.63 434.74 476.80 434.20 C478.80 434.15 480.80 430.41 482.80 428.80 C484.63 427.33 486.47 424.80 488.30 424.80 C490.43 424.80 492.57 427.71 494.70 428.80 C498.67 430.83 502.63 433.80 506.60 433.80 C532.73 433.80 558.87 432.80 585.00 432.80 C593.27 432.80 601.53 433.20 609.80 433.20 C619.70 433.20 629.60 432.16 639.50 431.80 C656.03 431.20 672.57 430.52 689.10 430.40 C705.63 430.28 722.17 430.20 738.70 430.20 C740.70 430.20 742.70 430.80 744.70 430.80 C748.00 430.80 751.30 422.50 754.60 422.50 C757.90 422.50 761.20 426.28 764.50 427.80 C767.80 429.32 771.10 431.58 774.40 431.80 C785.67 432.54 796.93 432.80 808.20 432.80 C823.40 432.80 838.60 431.40 853.80 431.40 C861.73 431.40 869.67 432.80 877.60 432.80 C890.83 432.80 904.07 431.80 917.30 431.80 C928.20 431.80 939.10 432.20 950.00 432.40 L950.00 503.2 L212.50 503.2 Z" fill="#5e6bbf"/><path d="M212.50 447.80 C215.30 449.13 218.10 450.72 220.90 451.80 C224.87 453.33 228.83 455.60 232.80 455.60 C313.47 455.60 394.13 455.60 474.80 455.60 C477.47 455.60 480.13 453.29 482.80 451.60 C484.77 450.36 486.73 446.70 488.70 446.70 C491.37 446.70 494.03 449.60 496.70 450.60 C500.00 451.84 503.30 453.60 506.60 453.60 C532.73 453.60 558.87 453.60 585.00 453.60 C636.23 453.60 687.47 453.60 738.70 453.60 C740.70 453.60 742.70 454.60 744.70 454.60 C748.00 454.60 751.30 446.70 754.60 446.70 C757.90 446.70 761.20 450.13 764.50 451.60 C767.80 453.07 771.10 455.60 774.40 455.60 C832.93 455.60 891.47 455.60 950.00 455.60 L950.00 503.2 L212.50 503.2 Z" fill="#55c3f2"/><path d="M212.50 449.60 C215.30 450.60 218.10 451.76 220.90 452.60 C224.87 453.78 228.83 455.60 232.80 455.60 C313.47 455.60 394.13 455.60 474.80 455.60 C477.47 455.60 480.13 453.29 482.80 451.60 C484.77 450.36 486.73 446.70 488.70 446.70 C491.37 446.70 494.03 449.60 496.70 450.60 C500.00 451.84 503.30 453.60 506.60 453.60 C532.73 453.60 558.87 453.60 585.00 453.60 C636.23 453.60 687.47 453.60 738.70 453.60 C740.70 453.60 742.70 454.60 744.70 454.60 C748.00 454.60 751.30 446.70 754.60 446.70 C757.90 446.70 761.20 450.13 764.50 451.60 C767.80 453.07 771.10 455.60 774.40 455.60 C832.93 455.60 891.47 455.60 950.00 455.60 L950.00 503.2 L212.50 503.2 Z" fill="#e2a800"/><path d="M212.60 266.90 C215.43 271.17 218.27 279.70 221.10 279.70 C223.07 279.70 225.03 276.49 227.00 273.70 C229.87 269.63 232.73 260.53 235.60 251.50 C237.90 244.26 240.20 232.25 242.50 224.20 C244.30 217.90 246.10 207.10 247.90 207.10 C249.50 207.10 251.10 215.80 252.70 219.90 C253.97 223.15 255.23 229.30 256.50 229.30 C258.07 229.30 259.63 214.16 261.20 210.50 C262.93 206.45 264.67 202.00 266.40 202.00 C268.67 202.00 270.93 209.03 273.20 213.00 C276.03 217.96 278.87 222.75 281.70 229.30 C283.13 232.61 284.57 235.84 286.00 241.20 C287.13 245.44 288.27 256.61 289.40 260.00 C290.67 263.79 291.93 267.70 293.20 267.70 C295.63 267.70 298.07 255.80 300.50 255.80 C301.93 255.80 303.37 262.74 304.80 266.90 C306.50 271.83 308.20 283.90 309.90 283.90 C312.17 283.90 314.43 267.68 316.70 261.70 C320.40 251.94 324.10 237.80 327.80 237.80 C330.67 237.80 333.53 251.50 336.40 251.50 C339.27 251.50 342.13 249.80 345.00 249.80 C348.40 249.80 351.80 255.98 355.20 257.50 C357.77 258.64 360.33 258.34 362.90 260.00 C364.60 261.10 366.30 277.02 368.00 283.90 C369.43 289.70 370.87 299.30 372.30 299.30 C375.40 299.30 378.50 280.50 381.60 280.50 C384.73 280.50 387.87 289.98 391.00 292.50 C393.87 294.81 396.73 295.43 399.60 297.60 C402.00 299.42 404.40 305.00 406.80 305.00 C410.23 305.00 413.67 289.30 417.10 289.30 C419.93 289.30 422.77 294.40 425.60 294.40 C428.47 294.40 431.33 292.40 434.20 292.40 C439.87 292.40 445.53 302.58 451.20 303.80 C456.90 305.03 462.60 306.00 468.30 306.00 C471.17 306.00 474.03 303.80 476.90 301.20 C479.73 298.63 482.57 284.55 485.40 280.70 C489.10 275.68 492.80 270.50 496.50 270.50 C499.63 270.50 502.77 276.57 505.90 279.00 C509.30 281.64 512.70 285.75 516.10 285.90 C520.67 286.10 525.23 285.99 529.80 286.20 C533.20 286.35 536.60 295.39 540.00 297.00 C542.30 298.09 544.60 299.20 546.90 299.20 C550.87 299.20 554.83 294.70 558.80 294.70 C562.23 294.70 565.67 298.75 569.10 299.50 C574.23 300.62 579.37 301.60 584.50 301.60 C586.33 301.60 588.17 300.82 590.00 300.40 C595.13 299.21 600.27 296.50 605.40 296.50 C608.23 296.50 611.07 298.08 613.90 299.00 C616.77 299.93 619.63 302.10 622.50 302.10 C624.77 302.10 627.03 301.30 629.30 301.30 C633.27 301.30 637.23 303.47 641.20 304.20 C645.77 305.04 650.33 304.78 654.90 306.20 C656.33 306.65 657.77 309.53 659.20 312.70 C660.60 315.79 662.00 326.31 663.40 329.80 C664.83 333.37 666.27 337.50 667.70 337.50 C670.27 337.50 672.83 335.24 675.40 333.20 C678.23 330.95 681.07 324.56 683.90 321.20 C686.77 317.80 689.63 312.40 692.50 312.40 C695.90 312.40 699.30 319.20 702.70 319.20 C705.00 319.20 707.30 318.29 709.60 317.50 C713.00 316.34 716.40 311.30 719.80 311.30 C722.63 311.30 725.47 313.00 728.30 313.00 C730.87 313.00 733.43 311.30 736.00 311.30 C739.13 311.30 742.27 313.60 745.40 313.60 C748.53 313.60 751.67 308.40 754.80 308.40 C757.93 308.40 761.07 312.86 764.20 314.40 C767.03 315.79 769.87 317.80 772.70 317.80 C775.00 317.80 777.30 317.50 779.60 317.50 C783.23 317.50 786.87 322.10 790.50 322.10 C792.77 322.10 795.03 321.20 797.30 321.20 C803.57 321.20 809.83 328.40 816.10 328.40 C819.53 328.40 822.97 325.70 826.40 325.70 C829.23 325.70 832.07 327.20 834.90 327.20 C837.73 327.20 840.57 326.70 843.40 326.70 C849.67 326.70 855.93 329.25 862.20 330.60 C865.63 331.34 869.07 331.97 872.50 332.90 C877.60 334.27 882.70 338.30 887.80 338.30 C891.80 338.30 895.80 334.60 899.80 334.60 C906.63 334.60 913.47 338.00 920.30 338.00 C924.30 338.00 928.30 332.30 932.30 332.30 C938.27 332.30 944.23 332.30 950.20 332.30" fill="none" stroke="rgba(50,60,90,0.45)" stroke-width="0.8"/><path d="M212.60 301.00 C215.43 305.27 218.27 313.80 221.10 313.80 C224.23 313.80 227.37 300.95 230.50 292.50 C233.90 283.33 237.30 267.66 240.70 258.30 C243.10 251.69 245.50 241.20 247.90 241.20 C250.77 241.20 253.63 262.60 256.50 262.60 C259.80 262.60 263.10 236.10 266.40 236.10 C270.37 236.10 274.33 248.74 278.30 256.60 C280.57 261.09 282.83 265.62 285.10 272.00 C287.67 279.22 290.23 301.00 292.80 301.00 C295.37 301.00 297.93 289.90 300.50 289.90 C303.63 289.90 306.77 317.20 309.90 317.20 C313.03 317.20 316.17 292.35 319.30 285.60 C322.13 279.49 324.97 272.00 327.80 272.00 C330.93 272.00 334.07 285.60 337.20 285.60 C339.80 285.60 342.40 283.10 345.00 283.10 C348.40 283.10 351.80 289.04 355.20 290.80 C358.03 292.27 360.87 292.13 363.70 294.20 C366.57 296.30 369.43 331.80 372.30 331.80 C375.40 331.80 378.50 314.70 381.60 314.70 C384.73 314.70 387.87 324.05 391.00 326.60 C393.87 328.93 396.73 329.65 399.60 331.80 C402.00 333.60 404.40 338.80 406.80 338.80 C410.23 338.80 413.67 323.40 417.10 323.40 C419.93 323.40 422.77 328.60 425.60 328.60 C428.47 328.60 431.33 326.50 434.20 326.50 C439.87 326.50 445.53 337.81 451.20 338.80 C456.90 339.80 462.60 340.50 468.30 340.50 C471.17 340.50 474.03 338.13 476.90 335.40 C479.73 332.70 482.57 318.85 485.40 314.90 C489.10 309.74 492.80 304.30 496.50 304.30 C501.90 304.30 507.30 318.72 512.70 319.20 C518.40 319.71 524.10 319.44 529.80 320.00 C533.20 320.33 536.60 333.70 540.00 333.70 C542.30 333.70 544.60 333.22 546.90 332.80 C550.87 332.07 554.83 328.60 558.80 328.60 C562.23 328.60 565.67 332.83 569.10 333.70 C574.50 335.06 579.90 336.30 585.30 336.30 C586.87 336.30 588.43 333.73 590.00 333.20 C595.13 331.45 600.27 330.10 605.40 330.10 C611.10 330.10 616.80 336.30 622.50 336.30 C624.77 336.30 627.03 335.20 629.30 335.20 C637.83 335.20 646.37 336.66 654.90 340.00 C656.33 340.56 657.77 342.68 659.20 345.10 C661.77 349.43 664.33 371.60 666.90 371.60 C669.73 371.60 672.57 369.47 675.40 367.40 C678.23 365.33 681.07 358.89 683.90 355.40 C686.77 351.87 689.63 346.00 692.50 346.00 C695.90 346.00 699.30 353.20 702.70 353.20 C708.40 353.20 714.10 345.50 719.80 345.50 C722.63 345.50 725.47 347.70 728.30 347.70 C730.87 347.70 733.43 345.10 736.00 345.10 C739.13 345.10 742.27 347.70 745.40 347.70 C748.53 347.70 751.67 342.60 754.80 342.60 C760.77 342.60 766.73 351.60 772.70 351.60 C775.00 351.60 777.30 351.10 779.60 351.10 C783.23 351.10 786.87 356.30 790.50 356.30 C792.77 356.30 795.03 355.40 797.30 355.40 C803.57 355.40 809.83 362.20 816.10 362.20 C819.53 362.20 822.97 359.70 826.40 359.70 C832.07 359.70 837.73 360.31 843.40 360.90 C850.80 361.67 858.20 363.74 865.60 365.60 C873.00 367.46 880.40 372.50 887.80 372.50 C891.80 372.50 895.80 368.20 899.80 368.20 C906.63 368.20 913.47 372.10 920.30 372.10 C924.30 372.10 928.30 366.50 932.30 366.50 C938.27 366.50 944.23 366.83 950.20 367.00" fill="none" stroke="rgba(50,60,90,0.45)" stroke-width="0.8"/><path d="M212.60 314.70 C215.43 318.10 218.27 324.90 221.10 324.90 C224.80 324.90 228.50 310.05 232.20 299.30 C235.03 291.07 237.87 274.34 240.70 266.90 C243.10 260.60 245.50 252.30 247.90 252.30 C250.77 252.30 253.63 273.70 256.50 273.70 C259.80 273.70 263.10 247.20 266.40 247.20 C270.37 247.20 274.33 260.18 278.30 268.60 C280.57 273.41 282.83 279.06 285.10 285.60 C287.67 293.01 290.23 312.10 292.80 312.10 C295.37 312.10 297.93 301.00 300.50 301.00 C303.63 301.00 306.77 328.30 309.90 328.30 C313.03 328.30 316.17 302.74 319.30 295.90 C322.13 289.71 324.97 282.20 327.80 282.20 C330.93 282.20 334.07 295.90 337.20 295.90 C339.80 295.90 342.40 293.30 345.00 293.30 C348.40 293.30 351.80 299.24 355.20 301.00 C358.03 302.47 360.87 302.32 363.70 304.40 C366.57 306.51 369.43 343.70 372.30 343.70 C375.40 343.70 378.50 325.80 381.60 325.80 C384.73 325.80 387.87 335.06 391.00 336.90 C393.87 338.59 396.73 338.52 399.60 340.30 C402.00 341.79 404.40 349.90 406.80 349.90 C410.23 349.90 413.67 333.70 417.10 333.70 C419.93 333.70 422.77 338.80 425.60 338.80 C428.47 338.80 431.33 337.10 434.20 337.10 C439.87 337.10 445.53 345.70 451.20 347.40 C456.90 349.11 462.60 350.80 468.30 350.80 C471.17 350.80 474.03 348.38 476.90 345.60 C479.73 342.86 482.57 328.95 485.40 325.10 C489.10 320.08 492.80 314.90 496.50 314.90 C501.90 314.90 507.30 327.63 512.70 328.60 C518.40 329.62 524.10 329.18 529.80 330.30 C533.20 330.97 536.60 340.09 540.00 341.40 C542.30 342.29 544.60 343.10 546.90 343.10 C550.87 343.10 554.83 338.80 558.80 338.80 C562.23 338.80 565.67 342.12 569.10 343.10 C574.50 344.65 579.90 346.50 585.30 346.50 C586.87 346.50 588.43 344.80 590.00 344.30 C595.13 342.66 600.27 340.90 605.40 340.90 C611.10 340.90 616.80 346.50 622.50 346.50 C624.77 346.50 627.03 346.00 629.30 346.00 C637.83 346.00 646.37 347.48 654.90 351.10 C656.33 351.71 657.77 354.41 659.20 357.10 C661.77 361.92 664.33 381.90 666.90 381.90 C669.73 381.90 672.57 379.67 675.40 377.60 C678.23 375.53 681.07 369.87 683.90 366.50 C686.77 363.09 689.63 357.10 692.50 357.10 C696.20 357.10 699.90 363.60 703.60 363.60 C709.00 363.60 714.40 356.80 719.80 356.80 C722.63 356.80 725.47 358.00 728.30 358.00 C730.87 358.00 733.43 356.30 736.00 356.30 C739.13 356.30 742.27 358.00 745.40 358.00 C748.53 358.00 751.67 353.20 754.80 353.20 C760.77 353.20 766.73 361.48 772.70 361.90 C775.00 362.06 777.30 362.03 779.60 362.20 C783.23 362.47 786.87 366.50 790.50 366.50 C792.77 366.50 795.03 366.50 797.30 366.50 C803.57 366.50 809.83 372.50 816.10 372.50 C819.53 372.50 822.97 370.40 826.40 370.40 C832.07 370.40 837.73 371.03 843.40 371.60 C850.80 372.35 858.20 374.14 865.60 375.90 C873.00 377.66 880.40 382.70 887.80 382.70 C891.80 382.70 895.80 378.80 899.80 378.80 C906.63 378.80 913.47 382.40 920.30 382.40 C924.30 382.40 928.30 376.70 932.30 376.70 C938.27 376.70 944.23 377.30 950.20 377.60" fill="none" stroke="rgba(50,60,90,0.45)" stroke-width="0.8"/><path d="M212.50 422.50 C215.30 424.27 218.10 426.41 220.90 427.80 C224.20 429.44 227.50 431.52 230.80 431.80 C238.73 432.48 246.67 432.64 254.60 432.80 C264.53 433.01 274.47 432.98 284.40 433.20 C295.63 433.45 306.87 435.80 318.10 435.80 C333.30 435.80 348.50 435.80 363.70 435.80 C380.23 435.80 396.77 435.02 413.30 434.80 C434.47 434.52 455.63 434.74 476.80 434.20 C478.80 434.15 480.80 430.41 482.80 428.80 C484.63 427.33 486.47 424.80 488.30 424.80 C490.43 424.80 492.57 427.71 494.70 428.80 C498.67 430.83 502.63 433.80 506.60 433.80 C532.73 433.80 558.87 432.80 585.00 432.80 C593.27 432.80 601.53 433.20 609.80 433.20 C619.70 433.20 629.60 432.16 639.50 431.80 C656.03 431.20 672.57 430.52 689.10 430.40 C705.63 430.28 722.17 430.20 738.70 430.20 C740.70 430.20 742.70 430.80 744.70 430.80 C748.00 430.80 751.30 422.50 754.60 422.50 C757.90 422.50 761.20 426.28 764.50 427.80 C767.80 429.32 771.10 431.58 774.40 431.80 C785.67 432.54 796.93 432.80 808.20 432.80 C823.40 432.80 838.60 431.40 853.80 431.40 C861.73 431.40 869.67 432.80 877.60 432.80 C890.83 432.80 904.07 431.80 917.30 431.80 C928.20 431.80 939.10 432.20 950.00 432.40" fill="none" stroke="rgba(50,60,90,0.45)" stroke-width="0.8"/><path d="M212.50 449.60 C215.30 450.60 218.10 451.76 220.90 452.60 C224.87 453.78 228.83 455.60 232.80 455.60 C313.47 455.60 394.13 455.60 474.80 455.60 C477.47 455.60 480.13 453.29 482.80 451.60 C484.77 450.36 486.73 446.70 488.70 446.70 C491.37 446.70 494.03 449.60 496.70 450.60 C500.00 451.84 503.30 453.60 506.60 453.60 C532.73 453.60 558.87 453.60 585.00 453.60 C636.23 453.60 687.47 453.60 738.70 453.60 C740.70 453.60 742.70 454.60 744.70 454.60 C748.00 454.60 751.30 446.70 754.60 446.70 C757.90 446.70 761.20 450.13 764.50 451.60 C767.80 453.07 771.10 455.60 774.40 455.60 C832.93 455.60 891.47 455.60 950.00 455.60" fill="none" stroke="rgba(50,60,90,0.45)" stroke-width="0.8"/><line x1="212.6" y1="332.5" x2="950.2" y2="332.5" stroke="#f09a9e" stroke-width="3" stroke-dasharray="11 6"/><line x1="212.3" y1="162.5" x2="212.3" y2="503.2" stroke="#b8b8b8" stroke-width="1"/><line x1="212.3" y1="503.2" x2="950.6" y2="503.2" stroke="#a9b8c0" stroke-width="1"/></svg>
<div class="abs" style="left:309.10px;top:94.10px;width:17.8px;height:17.8px;border-radius:50%;background:#e3a600"></div>
<svg class="abs" style="left:309.00px;top:94.00px" width="18" height="18" viewBox="-9 -9 18 18"><path d="M-2.9 -3.2 Q-2.6 -5.3 0 -5.3 Q3 -5.3 3 -2.9 Q3 -1.5 1.3 -0.5 Q0 0.3 0 1.8" fill="none" stroke="#000" stroke-width="2.1" stroke-linecap="round"/><circle cx="0" cy="5" r="1.3" fill="#000"/></svg>
<svg class="abs" style="left:631px;top:98px" width="20" height="19" viewBox="631 98 20 19">
<g fill="none" stroke="#596a76" stroke-width="2" stroke-linecap="round">
<path d="M646.8 104.3 A6.3 6.3 0 0 0 635.6 104.8"/>
<path d="M635.5 110.2 A6.3 6.3 0 0 0 646.6 109.7"/>
</g>
<path d="M648.6 100.2 V106.2 H642.6 Z" fill="#596a76"/>
<path d="M633.7 114.3 V108.3 H639.7 Z" fill="#596a76"/>
</svg>
<svg class="abs" style="left:772.40px;top:94.90px" width="26" height="26" viewBox="-12 -12 26 26">
<circle cx="0" cy="0" r="8.4" fill="none" stroke="#4b6270" stroke-width="1.9"/>
<path d="M-4.5 0 H4.5 M0 -4.5 V4.5" stroke="#4b6270" stroke-width="1.9"/>
<path d="M6.6 6.3 L10.3 10" stroke="#4b6270" stroke-width="3.2" stroke-linecap="round"/>
</svg>
<div class="abs" style="left:814.10px;top:91.90px;width:44.60px;height:30.00px;background:#f4be28;border-radius:4px"></div>
<div class="abs" style="left:865.80px;top:91.90px;width:45.30px;height:30.00px;background:#f4f4f4;border-radius:4px"></div>
<div class="abs" style="left:919.10px;top:91.90px;width:33.80px;height:30.00px;background:#f4f4f4;border-radius:4px"></div>
<div class="abs" style="left:165.00px;top:571.00px;width:18px;height:18px;border-radius:50%;background:#e2a800"></div>
<div class="abs" style="left:305.00px;top:571.00px;width:18px;height:18px;border-radius:50%;background:#55c3f2"></div>
<div class="abs" style="left:418.00px;top:571.00px;width:18px;height:18px;border-radius:50%;background:#5e6bbf"></div>
<div class="abs" style="left:517.80px;top:571.00px;width:18px;height:18px;border-radius:50%;background:#3cc192"></div>
<div class="abs" style="left:591.00px;top:571.00px;width:18px;height:18px;border-radius:50%;background:#b35f33"></div>
<div class="abs" style="left:756.60px;top:571.00px;width:18px;height:18px;border-radius:50%;background:#1a87a8"></div>
<div class="abs" style="left:864.70px;top:571.00px;width:18px;height:18px;border-radius:50%;background:#86a332"></div>
<div class="abs" style="left:165.00px;top:602.00px;width:18px;height:18px;border-radius:50%;background:#c97fc7"></div>
<div class="abs" style="left:524.6px;top:609.5px;width:6.5px;height:2.2px;background:#f09a9e"></div><div class="abs" style="left:535.6px;top:609.5px;width:6.5px;height:2.2px;background:#f09a9e"></div>
<div class="abs" style="left:1189.00px;top:94.10px;width:17.8px;height:17.8px;border-radius:50%;background:#e3a600"></div>
<svg class="abs" style="left:1188.90px;top:94.00px" width="18" height="18" viewBox="-9 -9 18 18"><path d="M-2.9 -3.2 Q-2.6 -5.3 0 -5.3 Q3 -5.3 3 -2.9 Q3 -1.5 1.3 -0.5 Q0 0.3 0 1.8" fill="none" stroke="#000" stroke-width="2.1" stroke-linecap="round"/><circle cx="0" cy="5" r="1.3" fill="#000"/></svg>
<div class="abs" style="left:1221px;top:91.2px;width:33.7px;height:29.5px;background:#f4f4f4;border-radius:4px"></div>
<div class="abs" style="left:1263px;top:91.2px;width:29.6px;height:29.5px;background:#f4be28;border-radius:4px"></div>
<svg class="abs" style="left:1228px;top:94px" width="70" height="22" viewBox="1228 94 70 22">
<g fill="none" stroke="#111" stroke-width="1.95" stroke-linecap="round">
<circle cx="1235.4" cy="101.2" r="2.2"/><circle cx="1241.9" cy="108.4" r="2.2"/>
<line x1="1244.6" y1="98.4" x2="1233.4" y2="111.2"/>
<path d="M1281.3 100.9 Q1280.3 99.3 1278.2 99.3 Q1275.2 99.3 1275.2 102 Q1275.2 104 1278.2 104.8 Q1281.6 105.6 1281.6 108 Q1281.6 110.3 1278.2 110.3 Q1275.8 110.3 1274.8 108.6" stroke-width="2.3"/>
<line x1="1278.3" y1="97.9" x2="1278.3" y2="99.5" stroke-width="1.8"/><line x1="1278.3" y1="110" x2="1278.3" y2="111.6" stroke-width="1.8"/>
</g></svg>
<svg class="abs" style="left:1650.50px;top:93.20px" width="26" height="26" viewBox="-12 -12 26 26">
<circle cx="0" cy="0" r="8.4" fill="none" stroke="#4b6270" stroke-width="1.9"/>
<path d="M-4.5 0 H4.5 M0 -4.5 V4.5" stroke="#4b6270" stroke-width="1.9"/>
<path d="M6.6 6.3 L10.3 10" stroke="#4b6270" stroke-width="3.2" stroke-linecap="round"/>
</svg>
<div class="abs" style="left:1693.10px;top:89.90px;width:43.90px;height:30.90px;background:#f4be28;border-radius:4px"></div>
<div class="abs" style="left:1745.30px;top:89.90px;width:43.60px;height:30.90px;background:#f4f4f4;border-radius:4px"></div>
<div class="abs" style="left:1797.20px;top:89.90px;width:34.70px;height:30.90px;background:#f4f4f4;border-radius:4px"></div>
<svg class="abs" style="left:1000px;top:140px" width="860" height="400" viewBox="1000 140 860 400"><defs><pattern id="hN" patternUnits="userSpaceOnUse" x="2" y="0" width="5.67" height="5.67"><rect x="0" y="0" width="5.67" height="5.67" fill="#e2a800" opacity="0.1"/><path d="M-1 -1 L6.67 6.67 M-1 4.67 L1 6.67 M4.67 -1 L6.67 1" stroke="#e2a800" stroke-width="1.85"/></pattern><pattern id="hW" patternUnits="userSpaceOnUse" x="2" y="0" width="5.67" height="5.67"><rect x="0" y="0" width="5.67" height="5.67" fill="#de3e7c" opacity="0.1"/><path d="M-1 -1 L6.67 6.67 M-1 4.67 L1 6.67 M4.67 -1 L6.67 1" stroke="#de3e7c" stroke-width="1.85"/></pattern><pattern id="hS" patternUnits="userSpaceOnUse" x="2" y="0" width="5.67" height="5.67"><rect x="0" y="0" width="5.67" height="5.67" fill="#55c3f2" opacity="0.1"/><path d="M-1 -1 L6.67 6.67 M-1 4.67 L1 6.67 M4.67 -1 L6.67 1" stroke="#55c3f2" stroke-width="1.85"/></pattern></defs><line x1="1061.5" y1="498.93" x2="1828.5" y2="498.93" stroke="#e2e2e2" stroke-width="1"/><line x1="1061.5" y1="461.10" x2="1828.5" y2="461.10" stroke="#e2e2e2" stroke-width="1"/><line x1="1061.5" y1="423.27" x2="1828.5" y2="423.27" stroke="#e2e2e2" stroke-width="1"/><line x1="1061.5" y1="385.44" x2="1828.5" y2="385.44" stroke="#e2e2e2" stroke-width="1"/><line x1="1061.5" y1="347.61" x2="1828.5" y2="347.61" stroke="#e2e2e2" stroke-width="1"/><line x1="1061.5" y1="309.78" x2="1828.5" y2="309.78" stroke="#e2e2e2" stroke-width="1"/><line x1="1061.5" y1="271.95" x2="1828.5" y2="271.95" stroke="#e2e2e2" stroke-width="1"/><line x1="1061.5" y1="234.12" x2="1828.5" y2="234.12" stroke="#e2e2e2" stroke-width="1"/><line x1="1061.5" y1="196.29" x2="1828.5" y2="196.29" stroke="#e2e2e2" stroke-width="1"/><line x1="1061.5" y1="158.46" x2="1828.5" y2="158.46" stroke="#e2e2e2" stroke-width="1"/><line x1="1323.9" y1="158.5" x2="1323.9" y2="510" stroke="#e2e2e2" stroke-width="1"/><line x1="1576.2" y1="158.5" x2="1576.2" y2="510" stroke="#e2e2e2" stroke-width="1"/><line x1="1828.5" y1="158.5" x2="1828.5" y2="510" stroke="#e2e2e2" stroke-width="1"/><rect x="1101.80" y="204.40" width="90.80" height="39.80" fill="#e2a800"/><rect x="1101.80" y="244.20" width="90.80" height="44.00" fill="#de3e7c"/><rect x="1101.80" y="288.20" width="90.80" height="172.90" fill="#55c3f2"/><rect x="1353.90" y="383.60" width="91.10" height="47.40" fill="#e2a800"/><rect x="1353.90" y="431.00" width="91.10" height="20.80" fill="#de3e7c"/><rect x="1353.90" y="451.80" width="91.10" height="9.30" fill="#55c3f2"/><rect x="1606.20" y="375.40" width="91.00" height="47.40" fill="#e2a800"/><rect x="1606.20" y="422.80" width="91.00" height="38.30" fill="#de3e7c"/><rect x="1606.20" y="461.10" width="91.00" height="15.80" fill="#55c3f2"/><rect x="1202.30" y="181.80" width="91.30" height="279.30" fill="#fff"/><rect x="1202.30" y="181.80" width="91.30" height="79.00" fill="url(#hN)"/><rect x="1202.30" y="260.80" width="91.30" height="8.10" fill="url(#hW)"/><rect x="1202.30" y="268.90" width="91.30" height="192.20" fill="url(#hS)"/><rect x="1454.60" y="181.80" width="91.50" height="279.30" fill="#fff"/><rect x="1454.60" y="181.80" width="91.50" height="77.00" fill="url(#hN)"/><rect x="1454.60" y="258.80" width="91.50" height="8.00" fill="url(#hW)"/><rect x="1454.60" y="266.80" width="91.50" height="194.30" fill="url(#hS)"/><rect x="1707.00" y="181.80" width="91.00" height="279.30" fill="#fff"/><rect x="1707.00" y="181.80" width="91.00" height="79.20" fill="url(#hN)"/><rect x="1707.00" y="261.00" width="91.00" height="7.70" fill="url(#hW)"/><rect x="1707.00" y="268.70" width="91.00" height="192.40" fill="url(#hS)"/><line x1="1061.5" y1="461.1" x2="1828.5" y2="461.1" stroke="#b9b9b9" stroke-width="1"/><line x1="1071.6" y1="499.5" x2="1828.5" y2="499.5" stroke="#c4c4c4" stroke-width="1"/><line x1="1071.6" y1="158.5" x2="1071.6" y2="510" stroke="#b8b8b8" stroke-width="1"/></svg>
<div class="abs" style="left:1043.00px;top:567.00px;width:18px;height:18px;border-radius:50%;background:#e2a800"></div>
<div class="abs" style="left:1138.00px;top:567.00px;width:18px;height:18px;border-radius:50%;background:#de3e7c"></div>
<div class="abs" style="left:1232.00px;top:567.00px;width:18px;height:18px;border-radius:50%;background:#55c3f2"></div>
<div class="abs" style="left:1659.00px;top:567.00px;width:18px;height:18px;border-radius:50%;background:#de3e7c"></div>
<svg class="abs" style="left:1754px;top:567px" width="18" height="18" viewBox="0 0 18 18"><defs><clipPath id="cb"><circle cx="9" cy="9" r="9"/></clipPath></defs><g clip-path="url(#cb)" stroke="#de3e7c" stroke-width="2.2"><line x1="-10.0" y1="-2" x2="10.0" y2="20"/><line x1="-5.4" y1="-2" x2="14.6" y2="20"/><line x1="-0.8000000000000007" y1="-2" x2="19.2" y2="20"/><line x1="3.799999999999999" y1="-2" x2="23.799999999999997" y2="20"/><line x1="8.399999999999999" y1="-2" x2="28.4" y2="20"/><line x1="13.0" y1="-2" x2="33.0" y2="20"/></g></svg>
<div class="abs" style="left:295.00px;top:726.10px;width:17.8px;height:17.8px;border-radius:50%;background:#e3a600"></div>
<svg class="abs" style="left:294.90px;top:726.00px" width="18" height="18" viewBox="-9 -9 18 18"><path d="M-2.9 -3.2 Q-2.6 -5.3 0 -5.3 Q3 -5.3 3 -2.9 Q3 -1.5 1.3 -0.5 Q0 0.3 0 1.8" fill="none" stroke="#000" stroke-width="2.1" stroke-linecap="round"/><circle cx="0" cy="5" r="1.3" fill="#000"/></svg>
<svg class="abs" style="left:772.50px;top:724.30px" width="26" height="26" viewBox="-12 -12 26 26">
<circle cx="0" cy="0" r="8.4" fill="none" stroke="#4b6270" stroke-width="1.9"/>
<path d="M-4.5 0 H4.5 M0 -4.5 V4.5" stroke="#4b6270" stroke-width="1.9"/>
<path d="M6.6 6.3 L10.3 10" stroke="#4b6270" stroke-width="3.2" stroke-linecap="round"/>
</svg>
<div class="abs" style="left:814.10px;top:721.10px;width:44.70px;height:29.60px;background:#f4be28;border-radius:4px"></div>
<div class="abs" style="left:866.10px;top:721.10px;width:44.60px;height:29.60px;background:#f4f4f4;border-radius:4px"></div>
<div class="abs" style="left:919.00px;top:721.10px;width:34.00px;height:29.60px;background:#f4f4f4;border-radius:4px"></div>
<svg class="abs" style="left:0;top:760px" width="1000" height="177" viewBox="0 760 1000 177"><line x1="182.5" y1="789.3" x2="950.7" y2="789.3" stroke="#e2e2e2" stroke-width="1"/><line x1="182.5" y1="845.4" x2="950.7" y2="845.4" stroke="#e2e2e2" stroke-width="1"/><line x1="182.5" y1="902.4" x2="950.7" y2="902.4" stroke="#e2e2e2" stroke-width="1"/><line x1="445.5" y1="789.3" x2="445.5" y2="937" stroke="#e2e2e2" stroke-width="1"/><line x1="698.4" y1="789.3" x2="698.4" y2="937" stroke="#e2e2e2" stroke-width="1"/><line x1="950.7" y1="789.3" x2="950.7" y2="937" stroke="#e2e2e2" stroke-width="1"/><rect x="306.30" y="814.00" width="26.80" height="126.00" fill="#55c3f2"/><line x1="193.3" y1="789.3" x2="193.3" y2="937" stroke="#b8b8b8" stroke-width="1"/></svg>
<div class="abs" style="left:1204.90px;top:732.30px;width:17.8px;height:17.8px;border-radius:50%;background:#e3a600"></div>
<svg class="abs" style="left:1204.80px;top:732.20px" width="18" height="18" viewBox="-9 -9 18 18"><path d="M-2.9 -3.2 Q-2.6 -5.3 0 -5.3 Q3 -5.3 3 -2.9 Q3 -1.5 1.3 -0.5 Q0 0.3 0 1.8" fill="none" stroke="#000" stroke-width="2.1" stroke-linecap="round"/><circle cx="0" cy="5" r="1.3" fill="#000"/></svg>
<svg class="abs" style="left:1279.00px;top:722.50px" width="26" height="26" viewBox="-12 -12 26 26">
<circle cx="0" cy="0" r="8.4" fill="none" stroke="#4b6270" stroke-width="1.9"/>
<path d="M-4.5 0 H4.5 M0 -4.5 V4.5" stroke="#4b6270" stroke-width="1.9"/>
<path d="M6.6 6.3 L10.3 10" stroke="#4b6270" stroke-width="3.2" stroke-linecap="round"/>
</svg>
<div class="abs" style="left:1316.2px;top:722.1px;width:107.6px;height:31.6px;background:#279c59;border-radius:3.5px"></div>
<div class="abs" style="left:1429.1px;top:722.1px;width:164.6px;height:31.6px;border:1px solid #2f9e5f;border-radius:4px"></div>
<div class="abs" style="left:1511px;top:722.1px;width:1px;height:31.6px;background:#2f9e5f"></div>
<div class="abs" style="left:1600.1px;top:722.3px;width:231.6px;height:31.3px;border:1.3px solid #4a5f6c;border-radius:4px;overflow:hidden"><div style="position:absolute;left:199px;top:0.5px;width:30px;height:29px;background:#4b5f6b"></div></div>
<div class="abs" style="left:1700.2px;top:723.5px;width:1.3px;height:29px;background:#4a5f6c"></div>
<svg class="abs" style="left:1605px;top:730.8px" width="13" height="14" viewBox="0 0 13 14"><rect x="0" y="1.8" width="13" height="12" rx="1" fill="#4a5f6c"/><rect x="2.3" y="0" width="1.6" height="3.5" fill="#4a5f6c"/><rect x="9.1" y="0" width="1.6" height="3.5" fill="#4a5f6c"/><rect x="1.2" y="5.3" width="2" height="2" fill="#fff" opacity="0.75"/><rect x="4.0" y="5.3" width="2" height="2" fill="#fff" opacity="0.75"/><rect x="6.8" y="5.3" width="2" height="2" fill="#fff" opacity="0.75"/><rect x="9.6" y="5.3" width="2" height="2" fill="#fff" opacity="0.75"/><rect x="1.2" y="8.1" width="2" height="2" fill="#fff" opacity="0.75"/><rect x="4.0" y="8.1" width="2" height="2" fill="#fff" opacity="0.75"/><rect x="6.8" y="8.1" width="2" height="2" fill="#fff" opacity="0.75"/><rect x="9.6" y="8.1" width="2" height="2" fill="#fff" opacity="0.75"/><rect x="1.2" y="10.9" width="2" height="2" fill="#fff" opacity="0.75"/><rect x="4.0" y="10.9" width="2" height="2" fill="#fff" opacity="0.75"/><rect x="6.8" y="10.9" width="2" height="2" fill="#fff" opacity="0.75"/><rect x="9.6" y="10.9" width="2" height="2" fill="#fff" opacity="0.75"/></svg>
<svg class="abs" style="left:1706px;top:730.8px" width="13" height="14" viewBox="0 0 13 14"><rect x="0" y="1.8" width="13" height="12" rx="1" fill="#4a5f6c"/><rect x="2.3" y="0" width="1.6" height="3.5" fill="#4a5f6c"/><rect x="9.1" y="0" width="1.6" height="3.5" fill="#4a5f6c"/><rect x="1.2" y="5.3" width="2" height="2" fill="#fff" opacity="0.75"/><rect x="4.0" y="5.3" width="2" height="2" fill="#fff" opacity="0.75"/><rect x="6.8" y="5.3" width="2" height="2" fill="#fff" opacity="0.75"/><rect x="9.6" y="5.3" width="2" height="2" fill="#fff" opacity="0.75"/><rect x="1.2" y="8.1" width="2" height="2" fill="#fff" opacity="0.75"/><rect x="4.0" y="8.1" width="2" height="2" fill="#fff" opacity="0.75"/><rect x="6.8" y="8.1" width="2" height="2" fill="#fff" opacity="0.75"/><rect x="9.6" y="8.1" width="2" height="2" fill="#fff" opacity="0.75"/><rect x="1.2" y="10.9" width="2" height="2" fill="#fff" opacity="0.75"/><rect x="4.0" y="10.9" width="2" height="2" fill="#fff" opacity="0.75"/><rect x="6.8" y="10.9" width="2" height="2" fill="#fff" opacity="0.75"/><rect x="9.6" y="10.9" width="2" height="2" fill="#fff" opacity="0.75"/></svg>
<svg class="abs" style="left:1000px;top:780px" width="860" height="157" viewBox="1000 780 860 157"><line x1="1061.5" y1="801.3" x2="1828.6" y2="801.3" stroke="#e2e2e2" stroke-width="1"/><line x1="1061.5" y1="833.6" x2="1828.6" y2="833.6" stroke="#e2e2e2" stroke-width="1"/><line x1="1061.5" y1="866.3" x2="1828.6" y2="866.3" stroke="#e2e2e2" stroke-width="1"/><line x1="1061.5" y1="899.5" x2="1828.6" y2="899.5" stroke="#e2e2e2" stroke-width="1"/><line x1="1061.5" y1="932.5" x2="1828.6" y2="932.5" stroke="#e2e2e2" stroke-width="1"/><line x1="1109.45" y1="801.3" x2="1109.45" y2="937" stroke="#e2e2e2" stroke-width="1"/><line x1="1147.30" y1="801.3" x2="1147.30" y2="937" stroke="#e2e2e2" stroke-width="1"/><line x1="1185.15" y1="801.3" x2="1185.15" y2="937" stroke="#e2e2e2" stroke-width="1"/><line x1="1223.00" y1="801.3" x2="1223.00" y2="937" stroke="#e2e2e2" stroke-width="1"/><line x1="1260.85" y1="801.3" x2="1260.85" y2="937" stroke="#e2e2e2" stroke-width="1"/><line x1="1298.70" y1="801.3" x2="1298.70" y2="937" stroke="#e2e2e2" stroke-width="1"/><line x1="1336.55" y1="801.3" x2="1336.55" y2="937" stroke="#e2e2e2" stroke-width="1"/><line x1="1374.40" y1="801.3" x2="1374.40" y2="937" stroke="#e2e2e2" stroke-width="1"/><line x1="1412.25" y1="801.3" x2="1412.25" y2="937" stroke="#e2e2e2" stroke-width="1"/><line x1="1450.10" y1="801.3" x2="1450.10" y2="937" stroke="#e2e2e2" stroke-width="1"/><line x1="1487.95" y1="801.3" x2="1487.95" y2="937" stroke="#e2e2e2" stroke-width="1"/><line x1="1525.80" y1="801.3" x2="1525.80" y2="937" stroke="#e2e2e2" stroke-width="1"/><line x1="1563.65" y1="801.3" x2="1563.65" y2="937" stroke="#e2e2e2" stroke-width="1"/><line x1="1601.50" y1="801.3" x2="1601.50" y2="937" stroke="#e2e2e2" stroke-width="1"/><line x1="1639.35" y1="801.3" x2="1639.35" y2="937" stroke="#e2e2e2" stroke-width="1"/><line x1="1677.20" y1="801.3" x2="1677.20" y2="937" stroke="#e2e2e2" stroke-width="1"/><line x1="1715.05" y1="801.3" x2="1715.05" y2="937" stroke="#e2e2e2" stroke-width="1"/><line x1="1752.90" y1="801.3" x2="1752.90" y2="937" stroke="#e2e2e2" stroke-width="1"/><line x1="1790.75" y1="801.3" x2="1790.75" y2="937" stroke="#e2e2e2" stroke-width="1"/><line x1="1828.60" y1="801.3" x2="1828.60" y2="937" stroke="#e2e2e2" stroke-width="1"/><rect x="1076.80" y="865.00" width="27.30" height="80.00" fill="#e2a800"/><rect x="1114.65" y="839.10" width="27.30" height="25.90" fill="#55c3f2"/><rect x="1152.50" y="833.60" width="27.30" height="5.50" fill="#55c3f2"/><rect x="1190.35" y="830.00" width="27.30" height="4.00" fill="#55c3f2"/><rect x="1228.20" y="826.60" width="27.30" height="3.20" fill="#55c3f2"/><rect x="1266.05" y="824.80" width="27.30" height="1.80" fill="#55c3f2"/><rect x="1303.90" y="823.20" width="27.30" height="1.60" fill="#55c3f2"/><rect x="1341.75" y="822.10" width="27.30" height="1.20" fill="#55c3f2"/><rect x="1379.60" y="821.30" width="27.30" height="1.30" fill="#55c3f2"/><rect x="1417.45" y="820.90" width="27.30" height="1.00" fill="#55c3f2"/><rect x="1455.30" y="820.90" width="27.30" height="1.00" fill="#de3e7c"/><rect x="1493.15" y="821.80" width="27.30" height="1.10" fill="#de3e7c"/><rect x="1531.00" y="822.80" width="27.30" height="1.60" fill="#de3e7c"/><rect x="1568.85" y="824.30" width="27.30" height="1.60" fill="#de3e7c"/><rect x="1606.70" y="825.90" width="27.30" height="1.90" fill="#de3e7c"/><rect x="1644.55" y="827.70" width="27.30" height="10.10" fill="#de3e7c"/><rect x="1682.40" y="837.60" width="27.30" height="33.80" fill="#de3e7c"/><rect x="1720.25" y="871.40" width="27.30" height="73.60" fill="#de3e7c"/><line x1="1071.6" y1="801.3" x2="1071.6" y2="937" stroke="#b8b8b8" stroke-width="1"/></svg>
<span class="t" id="logo1" style="left:86.00px;top:19.74px;font-size:22.90px;line-height:22.90px;color:#e3a600;font-weight:700;letter-spacing:-1.050px;">MONEY</span>
<span class="t" id="logo2" style="left:174.00px;top:19.74px;font-size:22.90px;line-height:22.90px;color:#249a56;font-weight:700;letter-spacing:-0.657px;">INSIGHTS</span>
<span class="t" id="pro" style="left:462.40px;top:21.25px;font-size:15.94px;line-height:15.94px;color:#ffffff;font-weight:500;transform:scaleX(1.0696);transform-origin:1.0px 0;">Pro</span>
<span class="t" id="welcome" style="left:1553.20px;top:7.74px;font-size:13.48px;line-height:13.48px;color:#5b6c7c;font-weight:400;letter-spacing:1.183px;">Welcome</span>
<span class="t" id="david" style="left:1551.20px;top:25.37px;font-size:21.45px;line-height:21.45px;color:#0c1a2a;font-weight:400;letter-spacing:0.975px;">David</span>
<span class="t" id="badge" style="left:40.60px;top:153.91px;font-size:13.04px;line-height:13.04px;color:#111;font-weight:600;letter-spacing:-1.100px;">1145</span>
<span class="t" id="c1title" style="left:154.70px;top:92.92px;font-size:19.28px;line-height:19.28px;color:#111111;font-weight:400;letter-spacing:0.827px;">Liquidity Trends</span>
<span class="t" id="lastsync" style="left:373.70px;top:100.39px;font-size:15.07px;line-height:15.07px;color:#6c7580;font-weight:400;letter-spacing:0.267px;">Last Sync 10 hours ago</span>
<span class="t" id="syncagain" style="left:541.00px;top:100.14px;font-size:15.36px;line-height:15.36px;color:#1b93b4;font-weight:700;letter-spacing:0.367px;">Sync Again</span>
<span class="t" id="c1b1" style="left:825.40px;top:99.83px;font-size:14.20px;line-height:14.20px;color:#1b1b1b;font-weight:400;transform:scaleX(1.1444);transform-origin:1.0px 0;">3m</span>
<span class="t" id="c1b2" style="left:876.60px;top:99.83px;font-size:14.20px;line-height:14.20px;color:#1b1b1b;font-weight:400;transform:scaleX(1.1778);transform-origin:1.0px 0;">6m</span>
<span class="t" id="c1b3" style="left:929.60px;top:99.83px;font-size:14.20px;line-height:14.20px;color:#1b1b1b;font-weight:400;transform:scaleX(0.8286);transform-origin:1.0px 0;">1y</span>
<span class="t" id="lqy0" style="left:-199.00px;width:400px;text-align:right;top:495.02px;font-size:13.00px;line-height:13.00px;color:#6e6e6e;font-weight:400;">0k</span>
<span class="t" id="lqy1" style="left:-199.00px;width:400px;text-align:right;top:452.96px;font-size:13.00px;line-height:13.00px;color:#6e6e6e;font-weight:400;">20k</span>
<span class="t" id="lqy2" style="left:-199.00px;width:400px;text-align:right;top:409.86px;font-size:13.00px;line-height:13.00px;color:#6e6e6e;font-weight:400;">40k</span>
<span class="t" id="lqy3" style="left:-199.00px;width:400px;text-align:right;top:367.28px;font-size:13.00px;line-height:13.00px;color:#6e6e6e;font-weight:400;">60k</span>
<span class="t" id="lqy4" style="left:-199.00px;width:400px;text-align:right;top:324.70px;font-size:13.00px;line-height:13.00px;color:#6e6e6e;font-weight:400;">80k</span>
<span class="t" id="lqy5" style="left:-199.00px;width:400px;text-align:right;top:282.12px;font-size:13.00px;line-height:13.00px;color:#6e6e6e;font-weight:400;">100k</span>
<span class="t" id="lqy6" style="left:-199.00px;width:400px;text-align:right;top:239.54px;font-size:13.00px;line-height:13.00px;color:#6e6e6e;font-weight:400;">120k</span>
<span class="t" id="lqy7" style="left:-199.00px;width:400px;text-align:right;top:196.96px;font-size:13.00px;line-height:13.00px;color:#6e6e6e;font-weight:400;">140k</span>
<span class="t" id="lqy8" style="left:-199.00px;width:400px;text-align:right;top:154.38px;font-size:13.00px;line-height:13.00px;color:#6e6e6e;font-weight:400;">160k</span>
<span class="t" id="lqxm0" style="left:12.30px;width:400px;text-align:center;top:514.92px;font-size:13.00px;line-height:13.00px;color:#6e6e6e;font-weight:400;">May</span>
<span class="t" id="lqxy0" style="left:12.30px;width:400px;text-align:center;top:531.52px;font-size:13.00px;line-height:13.00px;color:#6e6e6e;font-weight:400;">2021</span>
<span class="t" id="lqxm1" style="left:288.00px;width:400px;text-align:center;top:514.92px;font-size:13.00px;line-height:13.00px;color:#6e6e6e;font-weight:400;">Jun</span>
<span class="t" id="lqxy1" style="left:288.00px;width:400px;text-align:center;top:531.52px;font-size:13.00px;line-height:13.00px;color:#6e6e6e;font-weight:400;">2021</span>
<span class="t" id="lqxm2" style="left:554.60px;width:400px;text-align:center;top:514.92px;font-size:13.00px;line-height:13.00px;color:#6e6e6e;font-weight:400;">Jul</span>
<span class="t" id="lqxy2" style="left:554.60px;width:400px;text-align:center;top:531.52px;font-size:13.00px;line-height:13.00px;color:#6e6e6e;font-weight:400;">2021</span>
<span class="t" id="lg0" style="left:194.20px;top:571.76px;font-size:14.64px;line-height:14.64px;color:#485262;font-weight:400;letter-spacing:0.040px;">Cash & Bank</span>
<span class="t" id="lg1" style="left:333.30px;top:571.76px;font-size:14.64px;line-height:14.64px;color:#485262;font-weight:400;letter-spacing:0.414px;">Deposits</span>
<span class="t" id="lg2" style="left:446.00px;top:571.76px;font-size:14.64px;line-height:14.64px;color:#485262;font-weight:400;letter-spacing:0.200px;">Shares</span>
<span class="t" id="lg3" style="left:546.00px;top:571.76px;font-size:14.64px;line-height:14.64px;color:#485262;font-weight:400;transform:scaleX(0.9250);transform-origin:1.0px 0;">MF</span>
<span class="t" id="lg4" style="left:619.30px;top:571.76px;font-size:14.64px;line-height:14.64px;color:#485262;font-weight:400;letter-spacing:0.350px;">Crypto Currency</span>
<span class="t" id="lg5" style="left:785.00px;top:571.76px;font-size:14.64px;line-height:14.64px;color:#485262;font-weight:400;letter-spacing:0.920px;">Custom</span>
<span class="t" id="lg6" style="left:893.40px;top:571.76px;font-size:14.64px;line-height:14.64px;color:#485262;font-weight:400;letter-spacing:0.300px;">Property</span>
<span class="t" id="lg7" style="left:194.20px;top:602.86px;font-size:14.64px;line-height:14.64px;color:#485262;font-weight:400;transform:scaleX(0.7769);transform-origin:1.0px 0;">ETF</span>
<span class="t" id="lg8" style="left:552.60px;top:602.86px;font-size:14.64px;line-height:14.64px;color:#485262;font-weight:400;letter-spacing:0.208px;">Emergency Fund</span>
<span class="t" id="c2title" style="left:1032.40px;top:93.25px;font-size:19.71px;line-height:19.71px;color:#111111;font-weight:400;letter-spacing:1.362px;">50-30-20 Chart</span>
<span class="t" id="c2b1" style="left:1703.60px;top:97.83px;font-size:14.20px;line-height:14.20px;color:#1b1b1b;font-weight:400;transform:scaleX(1.1556);transform-origin:1.0px 0;">3m</span>
<span class="t" id="c2b2" style="left:1755.50px;top:97.83px;font-size:14.20px;line-height:14.20px;color:#1b1b1b;font-weight:400;transform:scaleX(1.1889);transform-origin:1.0px 0;">6m</span>
<span class="t" id="c2b3" style="left:1807.40px;top:97.83px;font-size:14.20px;line-height:14.20px;color:#1b1b1b;font-weight:400;transform:scaleX(0.8429);transform-origin:1.0px 0;">1y</span>
<span class="t" id="c2y0" style="left:660.60px;width:400px;text-align:right;top:490.75px;font-size:13.00px;line-height:13.00px;color:#6e6e6e;font-weight:400;">-2k</span>
<span class="t" id="c2y1" style="left:660.60px;width:400px;text-align:right;top:452.92px;font-size:13.00px;line-height:13.00px;color:#6e6e6e;font-weight:400;">0k</span>
<span class="t" id="c2y2" style="left:660.60px;width:400px;text-align:right;top:415.09px;font-size:13.00px;line-height:13.00px;color:#6e6e6e;font-weight:400;">2k</span>
<span class="t" id="c2y3" style="left:660.60px;width:400px;text-align:right;top:377.26px;font-size:13.00px;line-height:13.00px;color:#6e6e6e;font-weight:400;">4k</span>
<span class="t" id="c2y4" style="left:660.60px;width:400px;text-align:right;top:339.94px;font-size:13.00px;line-height:13.00px;color:#6e6e6e;font-weight:400;">6k</span>
<span class="t" id="c2y5" style="left:660.60px;width:400px;text-align:right;top:301.60px;font-size:13.00px;line-height:13.00px;color:#6e6e6e;font-weight:400;">8k</span>
<span class="t" id="c2y6" style="left:660.60px;width:400px;text-align:right;top:263.77px;font-size:13.00px;line-height:13.00px;color:#6e6e6e;font-weight:400;">10k</span>
<span class="t" id="c2y7" style="left:660.60px;width:400px;text-align:right;top:225.94px;font-size:13.00px;line-height:13.00px;color:#6e6e6e;font-weight:400;">12k</span>
<span class="t" id="c2y8" style="left:660.60px;width:400px;text-align:right;top:188.11px;font-size:13.00px;line-height:13.00px;color:#6e6e6e;font-weight:400;">14k</span>
<span class="t" id="c2y9" style="left:660.60px;width:400px;text-align:right;top:150.28px;font-size:13.00px;line-height:13.00px;color:#6e6e6e;font-weight:400;">16k</span>
<span class="t" id="c2xm0" style="left:997.80px;width:400px;text-align:center;top:510.52px;font-size:13.00px;line-height:13.00px;color:#6e6e6e;font-weight:400;">May</span>
<span class="t" id="c2xy0" style="left:997.80px;width:400px;text-align:center;top:527.12px;font-size:13.00px;line-height:13.00px;color:#6e6e6e;font-weight:400;">2021</span>
<span class="t" id="c2xm1" style="left:1250.00px;width:400px;text-align:center;top:510.52px;font-size:13.00px;line-height:13.00px;color:#6e6e6e;font-weight:400;">Jun</span>
<span class="t" id="c2xy1" style="left:1250.00px;width:400px;text-align:center;top:527.12px;font-size:13.00px;line-height:13.00px;color:#6e6e6e;font-weight:400;">2021</span>
<span class="t" id="c2xm2" style="left:1502.30px;width:400px;text-align:center;top:510.52px;font-size:13.00px;line-height:13.00px;color:#6e6e6e;font-weight:400;">Jul</span>
<span class="t" id="c2xy2" style="left:1502.30px;width:400px;text-align:center;top:527.12px;font-size:13.00px;line-height:13.00px;color:#6e6e6e;font-weight:400;">2021</span>
<span class="t" id="l2a" style="left:1072.30px;top:567.95px;font-size:14.06px;line-height:14.06px;color:#485262;font-weight:400;letter-spacing:0.575px;">Needs</span>
<span class="t" id="l2b" style="left:1167.30px;top:567.95px;font-size:14.06px;line-height:14.06px;color:#485262;font-weight:400;letter-spacing:0.775px;">Wants</span>
<span class="t" id="l2c" style="left:1260.50px;top:567.95px;font-size:14.06px;line-height:14.06px;color:#485262;font-weight:400;letter-spacing:0.393px;">Routine Savings</span>
<span class="t" id="l2d" style="left:1688.60px;top:567.95px;font-size:14.06px;line-height:14.06px;color:#485262;font-weight:400;letter-spacing:0.860px;">Actual</span>
<span class="t" id="l2e" style="left:1782.70px;top:567.95px;font-size:14.06px;line-height:14.06px;color:#485262;font-weight:400;letter-spacing:0.900px;">Budget</span>
<span class="t" id="c3title" style="left:154.10px;top:725.89px;font-size:19.42px;line-height:19.42px;color:#111111;font-weight:400;letter-spacing:0.833px;">Savings Trend</span>
<span class="t" id="c3b1" style="left:825.60px;top:729.13px;font-size:14.20px;line-height:14.20px;color:#1b1b1b;font-weight:400;transform:scaleX(1.1611);transform-origin:1.0px 0;">3m</span>
<span class="t" id="c3b2" style="left:877.30px;top:729.13px;font-size:14.20px;line-height:14.20px;color:#1b1b1b;font-weight:400;transform:scaleX(1.1889);transform-origin:1.0px 0;">6m</span>
<span class="t" id="c3b3" style="left:929.50px;top:729.13px;font-size:14.20px;line-height:14.20px;color:#1b1b1b;font-weight:400;transform:scaleX(0.7857);transform-origin:1.0px 0;">1y</span>
<span class="t" id="c3y0" style="left:-217.80px;width:400px;text-align:right;top:781.12px;font-size:13.00px;line-height:13.00px;color:#6e6e6e;font-weight:400;">10k</span>
<span class="t" id="c3y1" style="left:-217.80px;width:400px;text-align:right;top:837.22px;font-size:13.00px;line-height:13.00px;color:#6e6e6e;font-weight:400;">8k</span>
<span class="t" id="c3y2" style="left:-217.80px;width:400px;text-align:right;top:894.22px;font-size:13.00px;line-height:13.00px;color:#6e6e6e;font-weight:400;">6k</span>
<span class="t" id="c4title" style="left:1032.10px;top:731.39px;font-size:19.42px;line-height:19.42px;color:#111111;font-weight:400;letter-spacing:1.000px;">Savings Waterfall</span>
<span class="t" id="curyear" style="left:1326.60px;top:729.23px;font-size:14.20px;line-height:14.20px;color:#ffffff;font-weight:500;letter-spacing:0.536px;">Current Year</span>
<span class="t" id="may21" style="left:1440.30px;top:731.54px;font-size:13.48px;line-height:13.48px;color:#3c9a5a;font-weight:400;letter-spacing:0.200px;">May 2021</span>
<span class="t" id="jun21" style="left:1527.00px;top:731.54px;font-size:13.48px;line-height:13.48px;color:#3c9a5a;font-weight:400;letter-spacing:0.029px;">Jun 2021</span>
<span class="t" id="d1" style="left:1623.80px;top:730.81px;font-size:13.04px;line-height:13.04px;color:#3e5060;font-weight:400;letter-spacing:-0.700px;">Jul 01, 2021</span>
<span class="t" id="d2" style="left:1724.00px;top:730.81px;font-size:13.04px;line-height:13.04px;color:#3e5060;font-weight:400;letter-spacing:-0.736px;">Jul 31, 2021</span>
<span class="t" id="go" style="left:1804.80px;top:731.88px;font-size:12.03px;line-height:12.03px;color:#ffffff;font-weight:700;transform:scaleX(1.1778);transform-origin:0.0px 0;">GO</span>
<span class="t" id="c4y0" style="left:660.40px;width:400px;text-align:right;top:793.12px;font-size:13.00px;line-height:13.00px;color:#6e6e6e;font-weight:400;">14k</span>
<span class="t" id="c4y1" style="left:660.40px;width:400px;text-align:right;top:825.42px;font-size:13.00px;line-height:13.00px;color:#6e6e6e;font-weight:400;">12k</span>
<span class="t" id="c4y2" style="left:660.40px;width:400px;text-align:right;top:858.12px;font-size:13.00px;line-height:13.00px;color:#6e6e6e;font-weight:400;">10k</span>
<span class="t" id="c4y3" style="left:660.40px;width:400px;text-align:right;top:891.32px;font-size:13.00px;line-height:13.00px;color:#6e6e6e;font-weight:400;">8k</span>
<span class="t" id="c4y4" style="left:660.40px;width:400px;text-align:right;top:924.32px;font-size:13.00px;line-height:13.00px;color:#6e6e6e;font-weight:400;">6k</span>
</body></html>
